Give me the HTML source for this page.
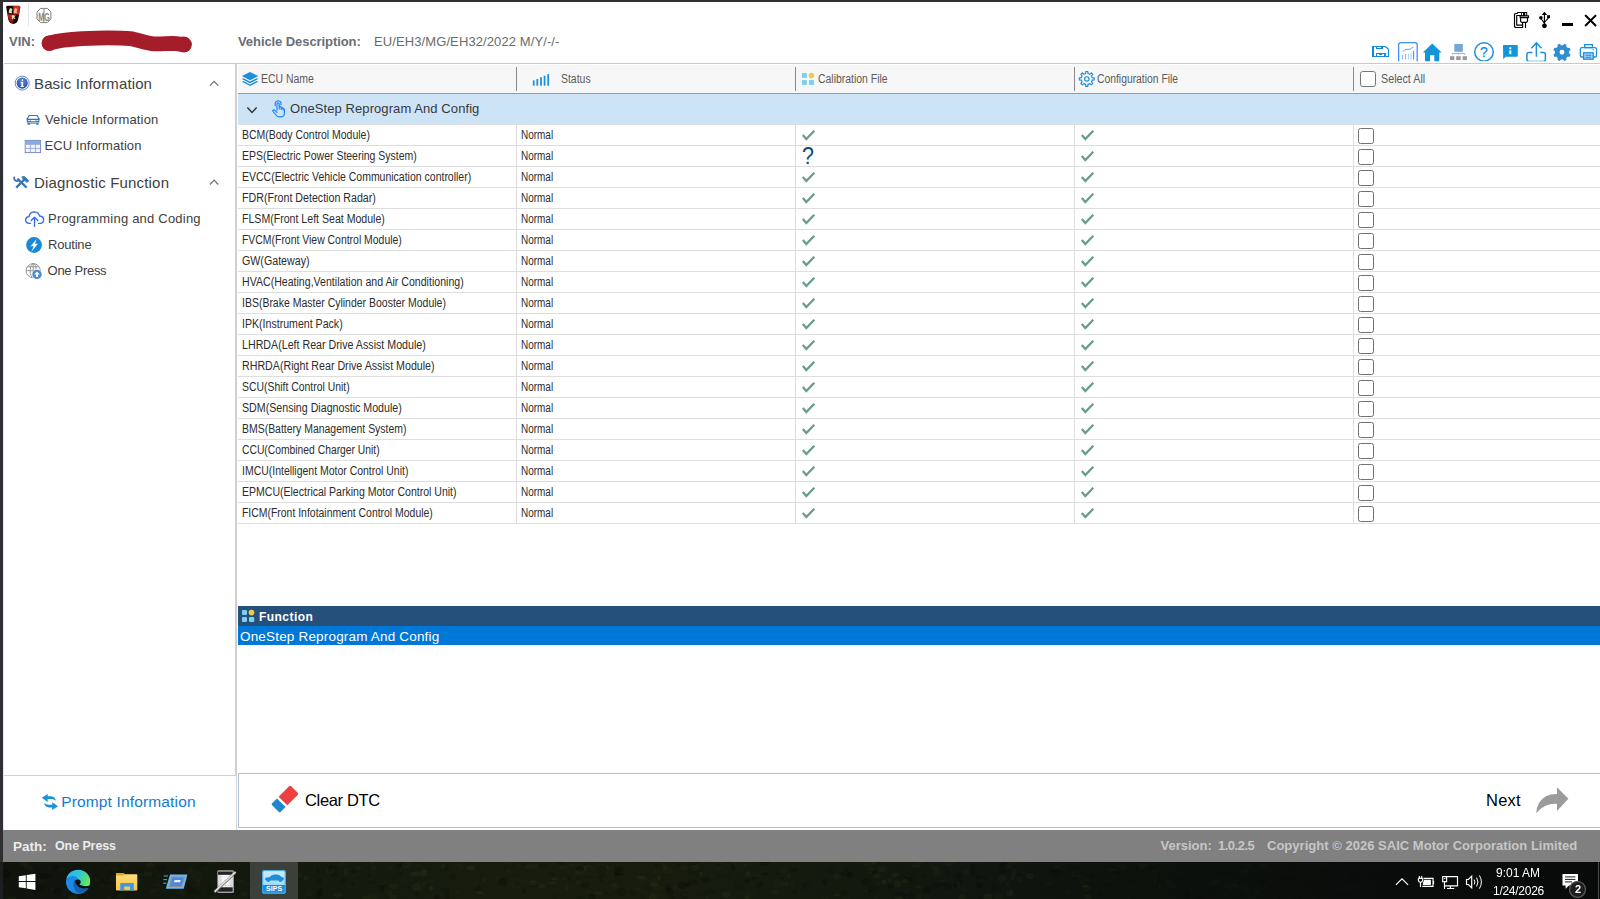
<!DOCTYPE html>
<html lang="en">
<head>
<meta charset="utf-8">
<title>SIPS - One Press</title>
<style>
*{box-sizing:border-box;margin:0;padding:0}
html,body{width:1600px;height:899px;overflow:hidden;background:#fff}
body{position:relative;font-family:"Liberation Sans",sans-serif;color:#333}
.abs{position:absolute}
.t{position:absolute;white-space:pre;line-height:1}
.g{will-change:transform}
svg{position:absolute;overflow:visible}
/* frame */
#btop{left:0;top:0;width:1600px;height:2px;background:#2f2f34}
#bleft{left:0;top:0;width:3px;height:862px;background:#2f2f34}
/* top */
#hline{left:4px;top:63px;width:1596px;height:1px;background:#cacaca}
.lbl{font-weight:700;font-size:13px;color:#696d76}
/* sidebar */
#sideR{left:235px;top:64px;width:2px;height:711px;background:#d0d0d0}
#sideR2{left:236px;top:775px;width:1px;height:55px;background:#d6d6d6}
#sideL{left:3px;top:64px;width:1px;height:766px;background:#e6e6e6}
#sideB{left:4px;top:775px;width:232px;height:1px;background:#d2d2d2}
.h1{font-size:15px;color:#404040;letter-spacing:0.05px}
.h2{font-size:13px;color:#404040;letter-spacing:0.05px}
/* table */
#thead{left:238px;top:65px;width:1362px;height:28px;background:#f7f7f7}
#theadB{left:238px;top:93px;width:1362px;height:1px;background:#9a9a9a}
#grp{left:238px;top:94px;width:1362px;height:31px;background:#cde4f7;border-bottom:1px solid #e0e0e0}
.hsep{position:absolute;top:67px;width:1px;height:24px;background:#8a8a8a}
.vsep{position:absolute;top:124px;width:1px;height:399px;background:#dedede}
.row{position:absolute;left:238px;width:1362px;height:22px;border-bottom:1px solid #dedede}
.cond{font-size:12px;transform:scaleX(0.87);transform-origin:0 0;white-space:pre;line-height:14px}
.row .n{position:absolute;left:3.6px;top:4px;color:#2c2c2c}
.row .s{position:absolute;left:283px;top:4px;color:#2c2c2c;transform:scaleX(0.83)}
.row .cb{position:absolute;left:1120px;top:4px;width:16px;height:16px;border:1px solid #707070;border-radius:2.5px;background:#fff}
.row svg.c1{left:563px;top:5px}
.row svg.c2{left:842px;top:5px}
.q{position:absolute;left:563.8px;top:0.4px;font-size:23.3px;color:#0b4a7c;line-height:22px;transform:scaleX(0.92);transform-origin:0 0}
.th{position:absolute;color:#5a5a5a;top:72px}
/* function */
#fnh{left:238px;top:606px;width:1362px;height:20px;background:#26507c}
#fnr{left:238px;top:626px;width:1362px;height:19px;background:#0078d7}
/* action */
#act{left:238px;top:773px;width:1364px;height:55px;border:1px solid #adc1d8;background:#fff}
/* status */
#status{left:3px;top:830px;width:1597px;height:32px;background:#808080}
/* taskbar */
#task{left:0;top:862px;width:1600px;height:37px;background:linear-gradient(90deg,#0f130c 0%,#14190e 15%,#171c0e 35%,#151a0f 50%,#10150e 62%,#0c100c 75%,#0a0c0b 88%,#090a0a 100%)}
</style>
</head>
<body>
<div class="abs" id="btop"></div>
<div class="abs" id="bleft"></div>
<div class="abs" id="hline"></div>
<div class="abs" id="sideR"></div><div class="abs" id="sideR2"></div><div class="abs" id="sideL"></div>
<div class="abs" id="sideB"></div>
<div class="abs" id="thead"></div>
<div class="abs" id="theadB"></div>
<div class="abs" id="grp"></div>
<div class="abs" id="fnh"></div>
<div class="abs" id="fnr"></div>
<div class="abs" id="act"></div>
<div class="abs" id="status"></div>
<div class="abs" id="task"></div>
<div class="hsep" style="left:516px"></div><div class="hsep" style="left:795px"></div><div class="hsep" style="left:1074px"></div><div class="hsep" style="left:1353px"></div>

<div class="row" style="top:124px"><span class="n cond" style="transform:scaleX(0.8716)">BCM(Body Control Module)</span><span class="s cond">Normal</span><svg class="c1" width="15" height="12" viewBox="0 0 15 12"><path d="M1.8 6.1 L5.3 10 L13.3 1.8" fill="none" stroke="#679d8a" stroke-width="2.3"/></svg><svg class="c2" width="15" height="12" viewBox="0 0 15 12"><path d="M1.8 6.1 L5.3 10 L13.3 1.8" fill="none" stroke="#679d8a" stroke-width="2.3"/></svg><span class="cb"></span></div>
<div class="row" style="top:145px"><span class="n cond" style="transform:scaleX(0.8737)">EPS(Electric Power Steering System)</span><span class="s cond">Normal</span><span class="q">?</span><svg class="c2" width="15" height="12" viewBox="0 0 15 12"><path d="M1.8 6.1 L5.3 10 L13.3 1.8" fill="none" stroke="#679d8a" stroke-width="2.3"/></svg><span class="cb"></span></div>
<div class="row" style="top:166px"><span class="n cond" style="transform:scaleX(0.8745)">EVCC(Electric Vehicle Communication controller)</span><span class="s cond">Normal</span><svg class="c1" width="15" height="12" viewBox="0 0 15 12"><path d="M1.8 6.1 L5.3 10 L13.3 1.8" fill="none" stroke="#679d8a" stroke-width="2.3"/></svg><svg class="c2" width="15" height="12" viewBox="0 0 15 12"><path d="M1.8 6.1 L5.3 10 L13.3 1.8" fill="none" stroke="#679d8a" stroke-width="2.3"/></svg><span class="cb"></span></div>
<div class="row" style="top:187px"><span class="n cond" style="transform:scaleX(0.8884)">FDR(Front Detection Radar)</span><span class="s cond">Normal</span><svg class="c1" width="15" height="12" viewBox="0 0 15 12"><path d="M1.8 6.1 L5.3 10 L13.3 1.8" fill="none" stroke="#679d8a" stroke-width="2.3"/></svg><svg class="c2" width="15" height="12" viewBox="0 0 15 12"><path d="M1.8 6.1 L5.3 10 L13.3 1.8" fill="none" stroke="#679d8a" stroke-width="2.3"/></svg><span class="cb"></span></div>
<div class="row" style="top:208px"><span class="n cond" style="transform:scaleX(0.8816)">FLSM(Front Left Seat Module)</span><span class="s cond">Normal</span><svg class="c1" width="15" height="12" viewBox="0 0 15 12"><path d="M1.8 6.1 L5.3 10 L13.3 1.8" fill="none" stroke="#679d8a" stroke-width="2.3"/></svg><svg class="c2" width="15" height="12" viewBox="0 0 15 12"><path d="M1.8 6.1 L5.3 10 L13.3 1.8" fill="none" stroke="#679d8a" stroke-width="2.3"/></svg><span class="cb"></span></div>
<div class="row" style="top:229px"><span class="n cond" style="transform:scaleX(0.8691)">FVCM(Front View Control Module)</span><span class="s cond">Normal</span><svg class="c1" width="15" height="12" viewBox="0 0 15 12"><path d="M1.8 6.1 L5.3 10 L13.3 1.8" fill="none" stroke="#679d8a" stroke-width="2.3"/></svg><svg class="c2" width="15" height="12" viewBox="0 0 15 12"><path d="M1.8 6.1 L5.3 10 L13.3 1.8" fill="none" stroke="#679d8a" stroke-width="2.3"/></svg><span class="cb"></span></div>
<div class="row" style="top:250px"><span class="n cond" style="transform:scaleX(0.8886)">GW(Gateway)</span><span class="s cond">Normal</span><svg class="c1" width="15" height="12" viewBox="0 0 15 12"><path d="M1.8 6.1 L5.3 10 L13.3 1.8" fill="none" stroke="#679d8a" stroke-width="2.3"/></svg><svg class="c2" width="15" height="12" viewBox="0 0 15 12"><path d="M1.8 6.1 L5.3 10 L13.3 1.8" fill="none" stroke="#679d8a" stroke-width="2.3"/></svg><span class="cb"></span></div>
<div class="row" style="top:271px"><span class="n cond" style="transform:scaleX(0.8823)">HVAC(Heating,Ventilation and Air Conditioning)</span><span class="s cond">Normal</span><svg class="c1" width="15" height="12" viewBox="0 0 15 12"><path d="M1.8 6.1 L5.3 10 L13.3 1.8" fill="none" stroke="#679d8a" stroke-width="2.3"/></svg><svg class="c2" width="15" height="12" viewBox="0 0 15 12"><path d="M1.8 6.1 L5.3 10 L13.3 1.8" fill="none" stroke="#679d8a" stroke-width="2.3"/></svg><span class="cb"></span></div>
<div class="row" style="top:292px"><span class="n cond" style="transform:scaleX(0.8735)">IBS(Brake Master Cylinder Booster Module)</span><span class="s cond">Normal</span><svg class="c1" width="15" height="12" viewBox="0 0 15 12"><path d="M1.8 6.1 L5.3 10 L13.3 1.8" fill="none" stroke="#679d8a" stroke-width="2.3"/></svg><svg class="c2" width="15" height="12" viewBox="0 0 15 12"><path d="M1.8 6.1 L5.3 10 L13.3 1.8" fill="none" stroke="#679d8a" stroke-width="2.3"/></svg><span class="cb"></span></div>
<div class="row" style="top:313px"><span class="n cond" style="transform:scaleX(0.8829)">IPK(Instrument Pack)</span><span class="s cond">Normal</span><svg class="c1" width="15" height="12" viewBox="0 0 15 12"><path d="M1.8 6.1 L5.3 10 L13.3 1.8" fill="none" stroke="#679d8a" stroke-width="2.3"/></svg><svg class="c2" width="15" height="12" viewBox="0 0 15 12"><path d="M1.8 6.1 L5.3 10 L13.3 1.8" fill="none" stroke="#679d8a" stroke-width="2.3"/></svg><span class="cb"></span></div>
<div class="row" style="top:334px"><span class="n cond" style="transform:scaleX(0.8891)">LHRDA(Left Rear Drive Assist Module)</span><span class="s cond">Normal</span><svg class="c1" width="15" height="12" viewBox="0 0 15 12"><path d="M1.8 6.1 L5.3 10 L13.3 1.8" fill="none" stroke="#679d8a" stroke-width="2.3"/></svg><svg class="c2" width="15" height="12" viewBox="0 0 15 12"><path d="M1.8 6.1 L5.3 10 L13.3 1.8" fill="none" stroke="#679d8a" stroke-width="2.3"/></svg><span class="cb"></span></div>
<div class="row" style="top:355px"><span class="n cond" style="transform:scaleX(0.8887)">RHRDA(Right Rear Drive Assist Module)</span><span class="s cond">Normal</span><svg class="c1" width="15" height="12" viewBox="0 0 15 12"><path d="M1.8 6.1 L5.3 10 L13.3 1.8" fill="none" stroke="#679d8a" stroke-width="2.3"/></svg><svg class="c2" width="15" height="12" viewBox="0 0 15 12"><path d="M1.8 6.1 L5.3 10 L13.3 1.8" fill="none" stroke="#679d8a" stroke-width="2.3"/></svg><span class="cb"></span></div>
<div class="row" style="top:376px"><span class="n cond" style="transform:scaleX(0.8682)">SCU(Shift Control Unit)</span><span class="s cond">Normal</span><svg class="c1" width="15" height="12" viewBox="0 0 15 12"><path d="M1.8 6.1 L5.3 10 L13.3 1.8" fill="none" stroke="#679d8a" stroke-width="2.3"/></svg><svg class="c2" width="15" height="12" viewBox="0 0 15 12"><path d="M1.8 6.1 L5.3 10 L13.3 1.8" fill="none" stroke="#679d8a" stroke-width="2.3"/></svg><span class="cb"></span></div>
<div class="row" style="top:397px"><span class="n cond" style="transform:scaleX(0.8874)">SDM(Sensing Diagnostic Module)</span><span class="s cond">Normal</span><svg class="c1" width="15" height="12" viewBox="0 0 15 12"><path d="M1.8 6.1 L5.3 10 L13.3 1.8" fill="none" stroke="#679d8a" stroke-width="2.3"/></svg><svg class="c2" width="15" height="12" viewBox="0 0 15 12"><path d="M1.8 6.1 L5.3 10 L13.3 1.8" fill="none" stroke="#679d8a" stroke-width="2.3"/></svg><span class="cb"></span></div>
<div class="row" style="top:418px"><span class="n cond" style="transform:scaleX(0.8715)">BMS(Battery Management System)</span><span class="s cond">Normal</span><svg class="c1" width="15" height="12" viewBox="0 0 15 12"><path d="M1.8 6.1 L5.3 10 L13.3 1.8" fill="none" stroke="#679d8a" stroke-width="2.3"/></svg><svg class="c2" width="15" height="12" viewBox="0 0 15 12"><path d="M1.8 6.1 L5.3 10 L13.3 1.8" fill="none" stroke="#679d8a" stroke-width="2.3"/></svg><span class="cb"></span></div>
<div class="row" style="top:439px"><span class="n cond" style="transform:scaleX(0.8601)">CCU(Combined Charger Unit)</span><span class="s cond">Normal</span><svg class="c1" width="15" height="12" viewBox="0 0 15 12"><path d="M1.8 6.1 L5.3 10 L13.3 1.8" fill="none" stroke="#679d8a" stroke-width="2.3"/></svg><svg class="c2" width="15" height="12" viewBox="0 0 15 12"><path d="M1.8 6.1 L5.3 10 L13.3 1.8" fill="none" stroke="#679d8a" stroke-width="2.3"/></svg><span class="cb"></span></div>
<div class="row" style="top:460px"><span class="n cond" style="transform:scaleX(0.8724)">IMCU(Intelligent Motor Control Unit)</span><span class="s cond">Normal</span><svg class="c1" width="15" height="12" viewBox="0 0 15 12"><path d="M1.8 6.1 L5.3 10 L13.3 1.8" fill="none" stroke="#679d8a" stroke-width="2.3"/></svg><svg class="c2" width="15" height="12" viewBox="0 0 15 12"><path d="M1.8 6.1 L5.3 10 L13.3 1.8" fill="none" stroke="#679d8a" stroke-width="2.3"/></svg><span class="cb"></span></div>
<div class="row" style="top:481px"><span class="n cond" style="transform:scaleX(0.8766)">EPMCU(Electrical Parking Motor Control Unit)</span><span class="s cond">Normal</span><svg class="c1" width="15" height="12" viewBox="0 0 15 12"><path d="M1.8 6.1 L5.3 10 L13.3 1.8" fill="none" stroke="#679d8a" stroke-width="2.3"/></svg><svg class="c2" width="15" height="12" viewBox="0 0 15 12"><path d="M1.8 6.1 L5.3 10 L13.3 1.8" fill="none" stroke="#679d8a" stroke-width="2.3"/></svg><span class="cb"></span></div>
<div class="row" style="top:502px"><span class="n cond" style="transform:scaleX(0.8695)">FICM(Front Infotainment Control Module)</span><span class="s cond">Normal</span><svg class="c1" width="15" height="12" viewBox="0 0 15 12"><path d="M1.8 6.1 L5.3 10 L13.3 1.8" fill="none" stroke="#679d8a" stroke-width="2.3"/></svg><svg class="c2" width="15" height="12" viewBox="0 0 15 12"><path d="M1.8 6.1 L5.3 10 L13.3 1.8" fill="none" stroke="#679d8a" stroke-width="2.3"/></svg><span class="cb"></span></div>
<div class="vsep" style="left:516px"></div><div class="vsep" style="left:795px"></div><div class="vsep" style="left:1074px"></div><div class="vsep" style="left:1353px"></div>

<svg id="ic" width="1600" height="862" viewBox="0 0 1600 862" style="left:0;top:0;overflow:hidden">
<defs>
<clipPath id="clipTb"><rect x="1360" y="38" width="240" height="23.2"/></clipPath>
<radialGradient id="gInfo" cx="0.5" cy="0.35" r="0.7"><stop offset="0" stop-color="#5f8fe0"/><stop offset="0.6" stop-color="#3b63b8"/><stop offset="1" stop-color="#2a4a98"/></radialGradient>
<linearGradient id="gShield" x1="0" y1="0" x2="0" y2="1"><stop offset="0" stop-color="#d8261c"/><stop offset="1" stop-color="#6a0f14"/></linearGradient>
</defs>

<!-- ===== logos ===== -->
<g id="roewe">
<path d="M6.2 7.2 Q6 5.9 7.4 5.8 H19 Q20.5 5.9 20.3 7.2 L18.2 19.5 Q17.2 23.6 13.3 24 Q9.3 23.6 8.3 19.5Z" fill="#160808"/>
<path d="M13.3 6 H19 Q20.3 6 20.1 7.2 L18.9 14.6 H13.3Z" fill="#d42a1e"/>
<path d="M7.6 14.6 H13.3 V23.6 Q9.6 23.2 8.6 19.6Z" fill="url(#gShield)"/>
<path d="M9.4 9.2 l1 -1.4 l0.9 1.2 l0.6 -1 l0.5 2 l-0.9 1.2 l0.8 1.4 l-1.2 0.8 l-1.4 -0.6 l-0.7 0.9 l-0.3 -1.6z" fill="#e9dcae"/>
<path d="M14.4 9.2 l1 -1.4 l0.9 1.2 l0.6 -1 l0.5 2 l-0.9 1.2 l0.8 1.4 l-1.2 0.8 l-1.4 -0.6 l-0.7 0.9 l-0.3 -1.6z" fill="#f0b49a"/>
<path d="M11.8 15.2 h2.6 l0.8 1 l-0.9 1 l1.2 1.8 h-1.3 l-0.9 -1.4 v1.6 h-1.4z" fill="#e6d9b0"/>
<path d="M14.6 14.8 l1.4 0.2 l-0.4 1.2z" fill="#3e8a3a"/>
</g>
<rect x="28" y="3" width="1" height="23" fill="#e4e4e4"/>
<g id="mg">
<path d="M40.6 8.4 H47.3 L50.9 11.9 V18.9 L47.3 22.6 H40.6 L37 18.9 V11.9Z" fill="#fff" stroke="#7d7d7d" stroke-width="1"/>
<path d="M43.9 8.8 V22.2" stroke="#bdbdbd" stroke-width="2"/>
<text x="38.3" y="20.6" font-family="Liberation Sans,sans-serif" font-weight="700" font-size="11.5" fill="#6f6f6f" opacity="0.85" textLength="11.4" lengthAdjust="spacingAndGlyphs">MG</text>
</g>

<!-- red scribble over VIN -->
<path d="M49.2 43.2 C 57 41, 70 39.3, 82 38.7 C 92 38.2, 100 37.9, 108 37.9 C 117 37.9, 124 37.9, 130 38.6 C 138 39.6, 146 43.4, 154 43.8 C 162 44.1, 170 43.2, 176 43.6 L 184 44.6" fill="none" stroke="#a51c2b" stroke-width="14.8" stroke-linecap="round" stroke-linejoin="round"/>
<circle cx="183.8" cy="44.6" r="8" fill="#a51c2b"/>
<circle cx="49.4" cy="43.3" r="7.8" fill="#a51c2b"/>

<!-- ===== window controls ===== -->
<g transform="translate(1514 12)" stroke="#000" stroke-width="1.15" fill="none" stroke-linejoin="round">
<path d="M8.9 15.5 H1.5 L0.5 14.5 V2.4 L1.4 1.5 H3.1 L3.6 0.5 H7.3"/>
<path d="M7 3.5 H2.7 V13.1 H8.4"/>
<path stroke="none" fill="#000" fill-rule="evenodd" d="M7.1 0 H13.2 V3.9 H7.1Z M8 1 H9 V3.5 H8Z M11.2 1 H12.2 V3.5 H11.2Z"/>
<rect x="6.1" y="3.85" width="8.4" height="1.75"/>
<path d="M6.6 6 V9.3 L7.7 10.4 H12.4 L13.5 9.3 V6"/>
<path d="M8.6 10.5 V15.9 M11.5 10.5 V15.9"/>
</g>
<g id="usb" fill="#000" stroke="none">
<rect x="1543.85" y="13" width="1.2" height="11.5"/>
<path d="M1544.45 11.7 L1547.2 14.9 H1541.7Z"/>
<circle cx="1544.45" cy="25.8" r="2.4"/>
<circle cx="1540.9" cy="17.8" r="1.8"/>
<rect x="1547.1" y="15.2" width="2.9" height="2.9"/>
<path d="M1540.9 18.5 L1544.2 22.8 M1548.5 17.8 L1544.8 22" stroke="#000" stroke-width="1.1" fill="none"/>
</g>
<rect x="1562" y="23" width="11" height="3" fill="#000"/>
<path d="M1585.8 15.8 L1595.3 25.3 M1595.3 15.8 L1585.8 25.3" stroke="#000" stroke-width="2" stroke-linecap="square" fill="none"/>

<!-- ===== toolbar icons ===== -->
<g clip-path="url(#clipTb)">
<!-- save -->
<g fill="#0f8bd8">
<path fill-rule="evenodd" d="M1372 46 H1384.9 L1387.3 47.3 L1389 49 V57 H1372Z M1374 47 H1376 V48.9 H1383 V47 H1384.5 L1386.5 48.2 L1387.9 49.6 V55.9 H1386.1 V53 H1376 V55.9 H1374Z M1377 47.1 H1381 V48 H1377Z M1377 54.1 H1384.1 V55.9 H1377Z"/>
<path d="M1378.8 54.1 H1382.4 L1381.8 54.9 H1379.4Z"/>
</g>
<!-- chart -->
<rect x="1398.6" y="42.6" width="18.6" height="24" rx="2.2" fill="none" stroke="#3d8eff" stroke-width="1.3"/>
<path d="M1403 51.6 Q1404.4 49.4 1406 49.3 H1410 L1413.3 47" fill="none" stroke="#4a96ff" stroke-width="0.9"/>
<path d="M1402.5 55 V59.2 M1405.5 54 V59.4" stroke="#7db2ff" stroke-width="1"/>
<path d="M1408.4 53.5 V59.4 M1411 53 V59.4" stroke="#a9ccff" stroke-width="1"/>
<path d="M1413.6 50.8 V59.5" stroke="#3d8eff" stroke-width="1.1"/>
<!-- home -->
<path d="M1432.25 43.4 L1441.7 52.6 H1439.3 V62 H1434.3 V55.2 H1430 V62 H1425 V52.6 H1422.8Z" fill="#1296db"/>
<!-- network -->
<rect x="1454.3" y="44" width="8.5" height="7.8" fill="#72a7d9"/>
<path d="M1452.4 54.8 V53.5 H1464.7 V54.8 M1458.5 53.5 V54.8" fill="none" stroke="#72a7d9" stroke-width="0.8"/>
<rect x="1450" y="56.2" width="4.3" height="3.9" fill="#9a9a9a"/>
<rect x="1456.2" y="56.2" width="4.5" height="3.9" fill="#9a9a9a"/>
<rect x="1462.6" y="56.2" width="4.3" height="3.9" fill="#9a9a9a"/>
<!-- help -->
<circle cx="1484" cy="52" r="9.25" fill="none" stroke="#1b8fde" stroke-width="1.5"/>
<text x="1480" y="57" font-family="Liberation Sans,sans-serif" font-size="14" fill="#1789da" stroke="#1789da" stroke-width="0.25" opacity="0.99">?</text>
<!-- info bubble -->
<path d="M1503.8 45 H1517 Q1517.8 45 1517.8 45.8 V56 Q1517.8 56.8 1517 56.8 H1505.6 L1503.2 59.2 L1503 45.8 Q1503 45 1503.8 45Z" fill="#1296db"/>
<rect x="1509.3" y="47.3" width="2" height="1.9" fill="#fff"/>
<rect x="1509.3" y="50.4" width="2" height="3.8" fill="#fff"/>
<!-- export -->
<g fill="none" stroke="#1b8fde" stroke-width="1.5">
<path d="M1536.4 43.2 V56.8 M1531.3 48.3 L1536.4 42.9 L1541.5 48.3"/>
<path d="M1532.4 52.4 H1529 Q1526.9 52.4 1526.9 54.5 V59.6 Q1526.9 61.5 1528.8 61.5 H1543.5 Q1545.4 61.5 1545.4 59.6 V54.5 Q1545.4 52.4 1543.3 52.4 H1540.2"/>
</g>
<!-- gear filled -->
<g transform="translate(1562 52.3)">
<path id="gearF" fill="#2f8dd0" fill-rule="evenodd" d="M1.18 -7.10 L2.15 -8.64 L4.59 -7.62 L4.19 -5.86 L5.86 -4.19 L7.62 -4.59 L8.64 -2.15 L7.10 -1.18 L7.10 1.18 L8.64 2.15 L7.62 4.59 L5.86 4.19 L4.19 5.86 L4.59 7.62 L2.15 8.64 L1.18 7.10 L-1.18 7.10 L-2.15 8.64 L-4.59 7.62 L-4.19 5.86 L-5.86 4.19 L-7.62 4.59 L-8.64 2.15 L-7.10 1.18 L-7.10 -1.18 L-8.64 -2.15 L-7.62 -4.59 L-5.86 -4.19 L-4.19 -5.86 L-4.59 -7.62 L-2.15 -8.64 L-1.18 -7.10Z M2.45 0 A2.45 2.45 0 1 0 -2.45 0 A2.45 2.45 0 1 0 2.45 0Z"/>
</g>
<!-- printer -->
<g fill="none" stroke="#1b8fde" stroke-width="1.3">
<rect x="1584.6" y="44.6" width="7.8" height="3"/>
<rect x="1580.3" y="47.6" width="16.2" height="9.4" rx="1.6"/>
<rect x="1583.6" y="52.8" width="9.6" height="6.4" fill="#a5d3f2"/>
<path d="M1585.6 55.3 H1591.2 M1585.6 57.3 H1591.2" stroke-width="1"/>
</g>
<circle cx="1593.3" cy="49.6" r="0.7" fill="#1b8fde"/>
</g>


<!-- ===== sidebar icons ===== -->
<!-- info -->
<circle cx="22.2" cy="83.1" r="7" fill="#fff" stroke="#5577c4" stroke-width="0.9"/>
<circle cx="22.2" cy="83.1" r="5.6" fill="url(#gInfo)"/>
<rect x="21.5" y="79.2" width="1.7" height="1.7" rx="0.8" fill="#fff"/>
<path d="M20.6 82 H23.1 V86.2 H24 V87 H20.4 V86.2 H21.4 V82.8 H20.6Z" fill="#fff"/>
<!-- car -->
<g fill="#3a74b4">
<path fill-rule="evenodd" d="M29.4 115 H36.8 Q37.7 115 38.1 115.9 L39.2 118.6 H40 V119.6 H39.4 V122.6 H26.8 V119.6 H26.2 V118.6 H27 L28.1 115.9 Q28.5 115 29.4 115Z M29.7 116.1 Q29.2 116.1 29 116.6 L28.2 118.8 H38 L37.2 116.6 Q37 116.1 36.5 116.1Z M27.9 119.9 V120.8 L30 121.2 V120.3Z M38.3 119.9 V120.8 L36.2 121.2 V120.3Z M30.6 120 H35.6 V121.3 H30.6Z"/>
<rect x="27.3" y="123.1" width="11.6" height="0.8" opacity="0.75"/>
<rect x="27.5" y="123.2" width="2.5" height="1.5"/>
<rect x="36.2" y="123.2" width="2.5" height="1.5"/>
</g>
<!-- grid -->
<g>
<rect x="25.2" y="140.4" width="15.4" height="12.2" fill="#f2f6fc" stroke="#6f82c4" stroke-width="0.9"/>
<rect x="25.7" y="140.9" width="14.4" height="3.2" fill="#7fb2e2"/>
<path d="M25.5 144.4 H40.3 M25.5 148.4 H40.3 M30.4 140.6 V152.4 M35.4 140.6 V152.4" stroke="#93a6d6" stroke-width="0.9" fill="none"/>
</g>
<!-- tools -->
<g fill="none" stroke="#3a74b4">
<path d="M17.4 178.6 L26.6 187.6" stroke-width="2.2"/>
<path d="M14.6 176.6 A2.9 2.9 0 0 0 18.6 180.6" stroke-width="1.7"/>
<path d="M16.2 187.6 L24.4 179.4" stroke-width="2.2"/>
<path d="M21.8 176.8 L24.4 176.4 L28.8 180.8 L27 182.6 L25.2 180.8 L23.8 180.2Z" fill="#3a74b4" stroke-width="0.8"/>
</g>
<!-- cloud upload -->
<g fill="none" stroke="#3569ef" stroke-width="1.35" stroke-linecap="round" stroke-linejoin="round">
<path d="M30.4 223.4 H29.2 Q25.6 223.2 25.6 219.8 Q25.8 216.8 29 216.6 Q29.8 211.8 34.4 211.8 Q38.6 212 39.6 216 Q43.6 216.4 43.6 219.8 Q43.4 223.2 40.2 223.4 H38.6"/>
<path d="M34.5 226.2 V217.6 M31.2 220.6 L34.5 217.3 L37.8 220.6"/>
</g>
<!-- routine bolt -->
<circle cx="34" cy="245" r="7.9" fill="#1889d6"/>
<path d="M36.9 238.7 L30.6 246.2 H33.8 L31.1 252 L38 243.8 H34.9Z" fill="#fff"/>
<!-- one press globe -->
<g fill="none" stroke="#8c8c8c" stroke-width="0.9">
<circle cx="33.2" cy="270.7" r="7.1"/>
<ellipse cx="33.2" cy="270.7" rx="3" ry="7.1"/>
<path d="M26.2 270.7 H40.2 M27.4 266.8 H39 M33.2 263.6 V277.8"/>
</g>
<circle cx="37" cy="274.4" r="5.3" fill="#fff"/>
<circle cx="37" cy="274.4" r="4.7" fill="#4a8bd2"/>
<path d="M37 271.6 L39.8 274.6 H38 V277 H36 V274.6 H34.2Z" fill="#fff"/>
<!-- chevrons -->
<path d="M210 85.7 L214.1 81.4 L218.2 85.7 M210 184.5 L214.1 180.2 L218.2 184.5" fill="none" stroke="#6e6e6e" stroke-width="1.15"/>

<!-- prompt info icon -->
<g fill="#1893dc">
<path d="M41.8 797.8 L47.7 793.9 V796.3 H51 Q55.4 796.6 55.9 800.8 Q54.6 799 51 799 H47.7 V801.9Z"/>
<path d="M58 806.2 L52.2 802.2 V804.7 H49 Q45.4 804.7 44.2 803 Q44.6 807.2 49 807.4 H52.2 V810.1Z"/>
</g>

<!-- ===== table header icons ===== -->
<!-- layers -->
<g fill="#1b8fde">
<path d="M250 71.9 L258.2 76 L250 80.2 L241.9 76Z"/>
<path d="M243.4 78.2 L250 81.6 L256.7 78.2 L258.2 79 L250 83.2 L241.9 79Z"/>
<path d="M243.4 81 L250 84.4 L256.7 81 L258.2 81.8 L250 86 L241.9 81.8Z"/>
</g>
<!-- signal bars -->
<g fill="#1b8fde">
<rect x="532.8" y="80.4" width="1.8" height="5.3"/>
<rect x="536.4" y="79.1" width="1.8" height="6.6"/>
<rect x="540.1" y="77.2" width="1.8" height="8.5"/>
<rect x="543.7" y="75.8" width="1.8" height="9.9"/>
<rect x="547.3" y="74.1" width="1.8" height="11.6"/>
</g>
<!-- four squares (calibration) -->
<g fill="#7ad2ee">
<rect x="801.9" y="73.1" width="5" height="5" rx="1"/>
<rect x="801.9" y="80" width="5" height="5" rx="1"/>
<rect x="808.9" y="80" width="5.2" height="5" rx="1"/>
<circle cx="811.4" cy="75.6" r="2.8" fill="#f2c94c"/>
</g>
<!-- gear outline -->
<g transform="translate(1086.8 78.9)" fill="none" stroke="#1b8fde" stroke-width="1.15" stroke-linejoin="round">
<path d="M-1.18 -5.47 L-1.00 -7.43 L1.00 -7.43 L1.18 -5.47 L3.04 -4.70 L4.55 -5.96 L5.96 -4.55 L4.70 -3.04 L5.47 -1.18 L7.43 -1.00 L7.43 1.00 L5.47 1.18 L4.70 3.04 L5.96 4.55 L4.55 5.96 L3.04 4.70 L1.18 5.47 L1.00 7.43 L-1.00 7.43 L-1.18 5.47 L-3.04 4.70 L-4.55 5.96 L-5.96 4.55 L-4.70 3.04 L-5.47 1.18 L-7.43 1.00 L-7.43 -1.00 L-5.47 -1.18 L-4.70 -3.04 L-5.96 -4.55 L-4.55 -5.96 L-3.04 -4.70Z"/>
<circle r="2.2"/>
</g>
<!-- header checkbox -->
<rect x="1360.5" y="71.5" width="15" height="15" rx="2.2" fill="#fff" stroke="#767676" stroke-width="1"/>
<!-- group row -->
<path d="M247.4 107.6 L252 112.4 L256.6 107.6" fill="none" stroke="#333" stroke-width="1.5"/>
<g fill="none" stroke="#1a80ff" stroke-width="1.15" stroke-linecap="round" stroke-linejoin="round">
<path d="M277 110.2 V104 Q277 102.8 278.1 102.8 Q279.2 102.8 279.2 104 V109 V107.6 Q279.2 106.6 280.2 106.6 Q281.2 106.6 281.2 107.8 V109.4 V108.4 Q281.2 107.6 282.2 107.6 Q283.1 107.6 283.1 108.6 V110 V109.4 Q283.2 108.6 283.9 108.8 Q284.4 109 284.4 110 V113 Q284.4 116.8 281 116.8 H279.2 Q277.2 116.8 276 115 L273 111.4 Q272.4 110.4 273.2 110 Q274 109.6 274.8 110.4 L277 112.4"/>
<path d="M275.2 105.6 Q274.6 101 278.1 100.8 Q281.6 101 281 105"/>
</g>

<!-- function icon -->
<g fill="#7ad2ee">
<rect x="242" y="610.1" width="5" height="5" rx="1"/>
<rect x="242" y="617.1" width="5" height="5" rx="1"/>
<rect x="249" y="617.1" width="5.2" height="5" rx="1"/>
<circle cx="251.5" cy="612.6" r="2.8" fill="#f2c94c"/>
</g>

<!-- ===== action bar ===== -->
<g transform="translate(285.0 799.0) rotate(-45)">
<path d="M-2.9 -6.1 H11.9 Q13.4 -6.1 13.4 -4.6 V4.6 Q13.4 6.1 11.9 6.1 H-2.9Z" fill="#ee4040"/>
<path d="M-5.3 -6.1 H-12.1 Q-13.6 -6.1 -13.6 -4.6 V4.6 Q-13.6 6.1 -12.1 6.1 H-5.3Z" fill="#1e87d0"/>
</g>
<path d="M1536.2 813.2 Q1537 801 1546 796.2 Q1550.5 794 1557 794.1 V787.3 L1568.4 798.7 L1557 811.1 V803.9 Q1550 803.6 1545 806 Q1540 808.6 1536.2 813.2Z" fill="#9b9b9b"/>
</svg>


<!-- TOP TEXT -->
<div class="t lbl" style="left:9px;top:35px">VIN:</div>
<div class="t lbl" style="left:238px;top:35px;letter-spacing:-0.08px">Vehicle Description:</div>
<div class="t" style="left:374px;top:35px;font-size:13px;color:#6b6b6b;letter-spacing:0.1px">EU/EH3/MG/EH32/2022 M/Y/-/-</div>

<!-- SIDEBAR TEXT -->
<div class="t h1" style="left:34px;top:76px;letter-spacing:0.13px">Basic Information</div>
<div class="t h2" style="left:45px;top:113px;letter-spacing:0.15px">Vehicle Information</div>
<div class="t h2" style="left:44.6px;top:139px">ECU Information</div>
<div class="t h1" style="left:34px;top:175px;letter-spacing:0.18px">Diagnostic Function</div>
<div class="t h2" style="left:48px;top:212px;letter-spacing:0.21px">Programming and Coding</div>
<div class="t h2" style="left:48px;top:238px;letter-spacing:-0.2px">Routine</div>
<div class="t h2" style="left:47.6px;top:264px;letter-spacing:-0.3px">One Press</div>
<div class="t" style="left:61.2px;top:794.3px;font-size:15.5px;color:#0f7bd4;letter-spacing:0.15px">Prompt Information</div>

<!-- TABLE HEADER TEXT -->
<div class="th cond" style="left:261px">ECU Name</div>
<div class="th cond" style="left:561px">Status</div>
<div class="th cond" style="left:818px">Calibration File</div>
<div class="th cond" style="left:1097px;transform:scaleX(0.862)">Configuration File</div>
<div class="th cond" style="left:1381px;transform:scaleX(0.895)">Select All</div>
<div class="t" style="left:290px;top:102px;font-size:13px;color:#383838;letter-spacing:0.08px">OneStep Reprogram And Config</div>

<!-- FUNCTION TEXT -->
<div class="t" style="left:259px;top:610.7px;font-size:12px;font-weight:700;color:#fff;letter-spacing:0.45px">Function</div>
<div class="t" style="left:240px;top:629.7px;font-size:13.5px;color:#fff;letter-spacing:0.18px">OneStep Reprogram And Config</div>

<!-- ACTION TEXT -->
<div class="t" style="left:305px;top:791.7px;font-size:16.5px;color:#000;letter-spacing:-0.35px">Clear DTC</div>
<div class="t" style="left:1486px;top:791.7px;font-size:16.5px;color:#000;letter-spacing:0.25px">Next</div>

<!-- STATUS TEXT -->
<div class="t" style="left:13px;top:840px;font-size:13.5px;font-weight:700;color:#ececec">Path:</div>
<div class="t" style="left:55px;top:839.8px;font-size:12.5px;font-weight:700;color:#ececec;letter-spacing:-0.1px">One Press</div>
<div class="t" style="left:1160.5px;top:838.7px;font-size:13px;font-weight:700;color:#c6c6c6">Version:</div>
<div class="t" style="left:1218px;top:838.7px;font-size:13px;font-weight:700;color:#c6c6c6;letter-spacing:-0.5px">1.0.2.5</div>
<div class="t" style="left:1267px;top:838.7px;font-size:13px;font-weight:700;color:#c6c6c6;letter-spacing:0.02px">Copyright © 2026 SAIC Motor Corporation Limited</div>

<svg id="ict" width="1600" height="37" viewBox="0 862 1600 37" style="left:0;top:862px;overflow:hidden">
<!-- ===== taskbar icons ===== -->
<defs>
<linearGradient id="gEdgeTop" x1="0" y1="0.2" x2="1" y2="0.55"><stop offset="0" stop-color="#33aef2"/><stop offset="0.5" stop-color="#30c4d6"/><stop offset="0.85" stop-color="#55dc78"/><stop offset="1" stop-color="#6fea5c"/></linearGradient>
<linearGradient id="gEdgeBot" x1="0" y1="0" x2="0.5" y2="1"><stop offset="0" stop-color="#1c86e2"/><stop offset="0.7" stop-color="#1a8ce6"/><stop offset="1" stop-color="#1a7fd8"/></linearGradient>
<linearGradient id="gFolder" x1="0" y1="0" x2="0" y2="1"><stop offset="0" stop-color="#ffdd78"/><stop offset="1" stop-color="#f6c74e"/></linearGradient>
<linearGradient id="gSipsTop" x1="0" y1="0" x2="0" y2="1"><stop offset="0" stop-color="#cfeeff"/><stop offset="1" stop-color="#86cff9"/></linearGradient>
<linearGradient id="gSipsBot" x1="0" y1="0" x2="0" y2="1"><stop offset="0" stop-color="#1684d0"/><stop offset="1" stop-color="#2a9ee8"/></linearGradient>
<clipPath id="clipEdge"><circle cx="78.1" cy="881.9" r="12.2"/></clipPath>
</defs>
<g id="tex"><ellipse cx="873" cy="889" rx="4.7" ry="3.8" fill="#040604" opacity="0.13"/><ellipse cx="653" cy="897" rx="4.1" ry="3.7" fill="#36451c" opacity="0.18"/><ellipse cx="535" cy="866" rx="2.5" ry="3.2" fill="#2f3d1a" opacity="0.19"/><ellipse cx="1073" cy="868" rx="4.7" ry="1.6" fill="#050705" opacity="0.09"/><ellipse cx="1361" cy="862" rx="4.6" ry="3.9" fill="#2f3d1a" opacity="0.01"/><ellipse cx="1346" cy="882" rx="4.2" ry="1.8" fill="#040604" opacity="0.02"/><ellipse cx="1351" cy="876" rx="1.6" ry="2.4" fill="#080a06" opacity="0.01"/><ellipse cx="424" cy="884" rx="1.5" ry="3.1" fill="#44521f" opacity="0.12"/><ellipse cx="431" cy="888" rx="2.2" ry="2.5" fill="#44521f" opacity="0.20"/><ellipse cx="35" cy="890" rx="4.9" ry="1.3" fill="#080a06" opacity="0.14"/><ellipse cx="1178" cy="879" rx="4.3" ry="2.9" fill="#050705" opacity="0.11"/><ellipse cx="1302" cy="897" rx="2.9" ry="2.2" fill="#36451c" opacity="0.02"/><ellipse cx="1049" cy="891" rx="4.9" ry="1.3" fill="#050705" opacity="0.11"/><ellipse cx="719" cy="875" rx="2.1" ry="2.0" fill="#050705" opacity="0.18"/><ellipse cx="446" cy="869" rx="1.8" ry="1.6" fill="#080a06" opacity="0.15"/><ellipse cx="71" cy="899" rx="3.6" ry="2.3" fill="#2a3a22" opacity="0.09"/><ellipse cx="353" cy="886" rx="2.1" ry="3.9" fill="#080a06" opacity="0.18"/><ellipse cx="292" cy="898" rx="3.8" ry="1.6" fill="#080a06" opacity="0.10"/><ellipse cx="610" cy="868" rx="4.9" ry="2.0" fill="#2a3a22" opacity="0.18"/><ellipse cx="1366" cy="879" rx="3.5" ry="3.2" fill="#44521f" opacity="0.01"/><ellipse cx="1263" cy="866" rx="4.8" ry="2.7" fill="#36451c" opacity="0.05"/><ellipse cx="255" cy="880" rx="3.6" ry="2.7" fill="#3a4a1e" opacity="0.13"/><ellipse cx="1086" cy="888" rx="4.2" ry="3.3" fill="#44521f" opacity="0.11"/><ellipse cx="373" cy="898" rx="4.4" ry="3.9" fill="#2f3d1a" opacity="0.15"/><ellipse cx="19" cy="882" rx="2.5" ry="3.1" fill="#2a3a22" opacity="0.12"/><ellipse cx="1117" cy="875" rx="4.1" ry="3.3" fill="#080a06" opacity="0.16"/><ellipse cx="244" cy="894" rx="3.3" ry="2.2" fill="#2f3d1a" opacity="0.10"/><ellipse cx="235" cy="893" rx="5.2" ry="2.5" fill="#040604" opacity="0.18"/><ellipse cx="585" cy="885" rx="5.2" ry="2.6" fill="#080a06" opacity="0.23"/><ellipse cx="1085" cy="886" rx="4.4" ry="1.3" fill="#36451c" opacity="0.10"/><ellipse cx="255" cy="890" rx="2.2" ry="3.2" fill="#050705" opacity="0.11"/><ellipse cx="1249" cy="866" rx="5.4" ry="2.6" fill="#36451c" opacity="0.04"/><ellipse cx="534" cy="885" rx="3.9" ry="1.9" fill="#050705" opacity="0.18"/><ellipse cx="1333" cy="894" rx="5.0" ry="3.1" fill="#3a4a1e" opacity="0.02"/><ellipse cx="424" cy="873" rx="3.6" ry="3.9" fill="#44521f" opacity="0.18"/><ellipse cx="588" cy="892" rx="4.1" ry="2.2" fill="#2a3a22" opacity="0.12"/><ellipse cx="669" cy="869" rx="2.0" ry="1.5" fill="#040604" opacity="0.12"/><ellipse cx="154" cy="883" rx="4.0" ry="1.6" fill="#040604" opacity="0.14"/><ellipse cx="606" cy="870" rx="2.7" ry="3.9" fill="#2f3d1a" opacity="0.15"/><ellipse cx="366" cy="898" rx="3.5" ry="2.4" fill="#44521f" opacity="0.13"/><ellipse cx="403" cy="880" rx="2.0" ry="2.9" fill="#44521f" opacity="0.08"/><ellipse cx="194" cy="877" rx="3.4" ry="2.8" fill="#36451c" opacity="0.13"/><ellipse cx="346" cy="872" rx="2.1" ry="4.0" fill="#2a3a22" opacity="0.20"/><ellipse cx="727" cy="894" rx="5.0" ry="3.7" fill="#2f3d1a" opacity="0.11"/><ellipse cx="748" cy="874" rx="2.7" ry="2.7" fill="#44521f" opacity="0.16"/><ellipse cx="1138" cy="867" rx="1.5" ry="2.7" fill="#050705" opacity="0.15"/><ellipse cx="765" cy="863" rx="4.6" ry="2.4" fill="#040604" opacity="0.29"/><ellipse cx="909" cy="894" rx="4.9" ry="2.5" fill="#040604" opacity="0.15"/><ellipse cx="417" cy="893" rx="1.8" ry="3.5" fill="#080a06" opacity="0.22"/><ellipse cx="909" cy="879" rx="2.7" ry="1.7" fill="#080a06" opacity="0.29"/><ellipse cx="755" cy="878" rx="3.7" ry="1.3" fill="#080a06" opacity="0.27"/><ellipse cx="1109" cy="887" rx="1.6" ry="3.2" fill="#080a06" opacity="0.14"/><ellipse cx="71" cy="893" rx="2.4" ry="3.0" fill="#040604" opacity="0.21"/><ellipse cx="615" cy="869" rx="2.2" ry="3.4" fill="#2f3d1a" opacity="0.08"/><ellipse cx="154" cy="876" rx="1.8" ry="1.4" fill="#040604" opacity="0.14"/><ellipse cx="874" cy="862" rx="1.9" ry="3.1" fill="#44521f" opacity="0.19"/><ellipse cx="526" cy="864" rx="4.3" ry="1.6" fill="#040604" opacity="0.17"/><ellipse cx="1319" cy="882" rx="2.4" ry="1.4" fill="#44521f" opacity="0.02"/><ellipse cx="190" cy="871" rx="3.0" ry="3.3" fill="#3a4a1e" opacity="0.12"/><ellipse cx="122" cy="887" rx="1.9" ry="1.5" fill="#050705" opacity="0.14"/><ellipse cx="649" cy="898" rx="1.9" ry="2.7" fill="#36451c" opacity="0.08"/><ellipse cx="214" cy="897" rx="4.2" ry="1.8" fill="#36451c" opacity="0.13"/><ellipse cx="198" cy="885" rx="2.9" ry="1.9" fill="#2a3a22" opacity="0.12"/><ellipse cx="1115" cy="876" rx="4.4" ry="2.2" fill="#36451c" opacity="0.11"/><ellipse cx="509" cy="863" rx="5.5" ry="1.8" fill="#3a4a1e" opacity="0.08"/><ellipse cx="49" cy="869" rx="1.7" ry="3.7" fill="#44521f" opacity="0.05"/><ellipse cx="660" cy="895" rx="4.0" ry="2.4" fill="#3a4a1e" opacity="0.09"/><ellipse cx="916" cy="865" rx="5.0" ry="3.6" fill="#2a3a22" opacity="0.10"/><ellipse cx="391" cy="868" rx="2.6" ry="1.9" fill="#3a4a1e" opacity="0.11"/><ellipse cx="1054" cy="874" rx="1.7" ry="1.3" fill="#2f3d1a" opacity="0.06"/><ellipse cx="937" cy="873" rx="4.2" ry="3.2" fill="#2f3d1a" opacity="0.15"/><ellipse cx="806" cy="886" rx="4.0" ry="3.8" fill="#040604" opacity="0.18"/><ellipse cx="657" cy="872" rx="4.4" ry="3.2" fill="#2f3d1a" opacity="0.09"/><ellipse cx="295" cy="864" rx="3.9" ry="3.2" fill="#36451c" opacity="0.06"/><ellipse cx="1092" cy="877" rx="1.7" ry="2.7" fill="#040604" opacity="0.14"/><ellipse cx="1315" cy="889" rx="2.4" ry="3.4" fill="#36451c" opacity="0.01"/><ellipse cx="343" cy="864" rx="3.1" ry="1.4" fill="#36451c" opacity="0.13"/><ellipse cx="898" cy="894" rx="5.3" ry="1.7" fill="#040604" opacity="0.19"/><ellipse cx="745" cy="865" rx="2.8" ry="1.5" fill="#2f3d1a" opacity="0.15"/><ellipse cx="1200" cy="870" rx="1.6" ry="2.7" fill="#2a3a22" opacity="0.07"/><ellipse cx="733" cy="867" rx="1.5" ry="3.3" fill="#050705" opacity="0.22"/><ellipse cx="197" cy="880" rx="4.6" ry="1.9" fill="#2f3d1a" opacity="0.07"/><ellipse cx="118" cy="871" rx="1.8" ry="2.4" fill="#050705" opacity="0.13"/><ellipse cx="691" cy="871" rx="4.3" ry="3.4" fill="#050705" opacity="0.13"/><ellipse cx="1078" cy="876" rx="4.6" ry="1.2" fill="#2f3d1a" opacity="0.09"/><ellipse cx="621" cy="892" rx="4.1" ry="3.9" fill="#040604" opacity="0.20"/><ellipse cx="152" cy="892" rx="3.7" ry="2.1" fill="#2f3d1a" opacity="0.08"/><ellipse cx="947" cy="873" rx="1.8" ry="3.3" fill="#050705" opacity="0.13"/><ellipse cx="1357" cy="893" rx="3.2" ry="1.9" fill="#050705" opacity="0.01"/><ellipse cx="602" cy="875" rx="2.8" ry="1.2" fill="#050705" opacity="0.25"/><ellipse cx="136" cy="882" rx="2.2" ry="3.2" fill="#36451c" opacity="0.13"/><ellipse cx="168" cy="874" rx="5.2" ry="2.5" fill="#36451c" opacity="0.06"/><ellipse cx="936" cy="868" rx="3.4" ry="2.6" fill="#2f3d1a" opacity="0.16"/><ellipse cx="589" cy="864" rx="5.4" ry="1.3" fill="#080a06" opacity="0.25"/><ellipse cx="498" cy="879" rx="2.3" ry="3.5" fill="#2a3a22" opacity="0.12"/><ellipse cx="1052" cy="871" rx="2.9" ry="1.9" fill="#050705" opacity="0.16"/><ellipse cx="563" cy="867" rx="4.8" ry="2.6" fill="#2f3d1a" opacity="0.12"/><ellipse cx="1056" cy="872" rx="5.2" ry="3.4" fill="#080a06" opacity="0.17"/><ellipse cx="1209" cy="885" rx="4.7" ry="2.3" fill="#2a3a22" opacity="0.06"/><ellipse cx="870" cy="892" rx="1.6" ry="3.1" fill="#040604" opacity="0.19"/><ellipse cx="668" cy="888" rx="3.1" ry="4.0" fill="#040604" opacity="0.22"/><ellipse cx="88" cy="867" rx="3.2" ry="3.9" fill="#2a3a22" opacity="0.07"/><ellipse cx="403" cy="863" rx="4.6" ry="2.9" fill="#040604" opacity="0.19"/><ellipse cx="1356" cy="863" rx="5.2" ry="1.9" fill="#3a4a1e" opacity="0.01"/><ellipse cx="1340" cy="895" rx="4.3" ry="3.5" fill="#040604" opacity="0.03"/><ellipse cx="678" cy="865" rx="2.0" ry="2.2" fill="#080a06" opacity="0.19"/><ellipse cx="7" cy="876" rx="2.2" ry="3.0" fill="#040604" opacity="0.17"/><ellipse cx="543" cy="866" rx="4.3" ry="2.7" fill="#080a06" opacity="0.16"/><ellipse cx="143" cy="873" rx="4.7" ry="3.4" fill="#2f3d1a" opacity="0.06"/><ellipse cx="580" cy="869" rx="4.1" ry="2.8" fill="#040604" opacity="0.28"/><ellipse cx="1020" cy="877" rx="3.2" ry="2.7" fill="#080a06" opacity="0.15"/><ellipse cx="121" cy="895" rx="2.8" ry="2.4" fill="#44521f" opacity="0.11"/><ellipse cx="846" cy="869" rx="2.3" ry="2.9" fill="#040604" opacity="0.18"/><ellipse cx="109" cy="897" rx="2.1" ry="2.7" fill="#2f3d1a" opacity="0.14"/><ellipse cx="904" cy="896" rx="2.4" ry="3.2" fill="#080a06" opacity="0.27"/><ellipse cx="5" cy="887" rx="1.9" ry="2.1" fill="#3a4a1e" opacity="0.11"/><ellipse cx="619" cy="874" rx="4.6" ry="1.7" fill="#040604" opacity="0.29"/><ellipse cx="876" cy="898" rx="1.9" ry="1.5" fill="#2f3d1a" opacity="0.11"/><ellipse cx="245" cy="895" rx="5.5" ry="3.3" fill="#2a3a22" opacity="0.10"/><ellipse cx="11" cy="898" rx="5.3" ry="1.6" fill="#36451c" opacity="0.15"/><ellipse cx="1323" cy="865" rx="4.5" ry="3.2" fill="#3a4a1e" opacity="0.03"/><ellipse cx="276" cy="875" rx="2.1" ry="3.7" fill="#050705" opacity="0.17"/><ellipse cx="416" cy="874" rx="4.9" ry="2.7" fill="#36451c" opacity="0.20"/><ellipse cx="382" cy="889" rx="2.1" ry="3.9" fill="#080a06" opacity="0.30"/><ellipse cx="759" cy="876" rx="5.2" ry="1.5" fill="#3a4a1e" opacity="0.07"/><ellipse cx="1073" cy="875" rx="1.6" ry="1.9" fill="#36451c" opacity="0.12"/><ellipse cx="113" cy="898" rx="2.3" ry="3.4" fill="#2a3a22" opacity="0.06"/><ellipse cx="393" cy="897" rx="4.2" ry="2.6" fill="#36451c" opacity="0.17"/><ellipse cx="702" cy="894" rx="5.3" ry="3.1" fill="#040604" opacity="0.13"/><ellipse cx="36" cy="890" rx="3.2" ry="3.6" fill="#080a06" opacity="0.09"/><ellipse cx="1142" cy="868" rx="2.9" ry="2.0" fill="#3a4a1e" opacity="0.10"/><ellipse cx="306" cy="878" rx="2.6" ry="2.5" fill="#3a4a1e" opacity="0.17"/><ellipse cx="1062" cy="865" rx="4.2" ry="1.3" fill="#2f3d1a" opacity="0.06"/><ellipse cx="29" cy="893" rx="5.3" ry="2.9" fill="#2f3d1a" opacity="0.06"/><ellipse cx="513" cy="885" rx="1.6" ry="3.5" fill="#2f3d1a" opacity="0.17"/><ellipse cx="524" cy="891" rx="2.1" ry="2.7" fill="#040604" opacity="0.22"/><ellipse cx="399" cy="866" rx="3.1" ry="2.1" fill="#040604" opacity="0.22"/><ellipse cx="1352" cy="871" rx="3.8" ry="1.9" fill="#36451c" opacity="0.01"/><ellipse cx="675" cy="888" rx="1.5" ry="3.4" fill="#2a3a22" opacity="0.16"/><ellipse cx="333" cy="873" rx="4.7" ry="1.9" fill="#080a06" opacity="0.26"/><ellipse cx="782" cy="878" rx="1.9" ry="1.5" fill="#040604" opacity="0.22"/><ellipse cx="999" cy="897" rx="5.3" ry="4.0" fill="#2f3d1a" opacity="0.12"/><ellipse cx="956" cy="886" rx="1.7" ry="1.8" fill="#050705" opacity="0.25"/><ellipse cx="421" cy="882" rx="4.8" ry="1.6" fill="#36451c" opacity="0.07"/><ellipse cx="792" cy="883" rx="1.7" ry="3.3" fill="#2f3d1a" opacity="0.12"/><ellipse cx="479" cy="892" rx="3.4" ry="1.6" fill="#44521f" opacity="0.18"/><ellipse cx="877" cy="876" rx="4.0" ry="1.9" fill="#36451c" opacity="0.19"/><ellipse cx="1171" cy="884" rx="3.8" ry="3.7" fill="#3a4a1e" opacity="0.03"/><ellipse cx="63" cy="892" rx="3.5" ry="3.6" fill="#2a3a22" opacity="0.09"/><ellipse cx="579" cy="882" rx="3.3" ry="2.8" fill="#3a4a1e" opacity="0.16"/><ellipse cx="1008" cy="884" rx="1.7" ry="3.2" fill="#2a3a22" opacity="0.15"/><ellipse cx="1010" cy="865" rx="4.1" ry="3.6" fill="#44521f" opacity="0.08"/><ellipse cx="420" cy="862" rx="4.5" ry="2.6" fill="#080a06" opacity="0.19"/><ellipse cx="919" cy="897" rx="2.8" ry="2.9" fill="#2f3d1a" opacity="0.11"/><ellipse cx="114" cy="878" rx="4.0" ry="3.0" fill="#2f3d1a" opacity="0.14"/><ellipse cx="240" cy="881" rx="5.2" ry="2.2" fill="#36451c" opacity="0.08"/><ellipse cx="693" cy="882" rx="5.1" ry="2.8" fill="#080a06" opacity="0.22"/><ellipse cx="354" cy="874" rx="4.0" ry="1.7" fill="#2a3a22" opacity="0.10"/><ellipse cx="882" cy="886" rx="5.3" ry="1.5" fill="#080a06" opacity="0.14"/><ellipse cx="1219" cy="873" rx="4.5" ry="1.7" fill="#040604" opacity="0.07"/><ellipse cx="892" cy="889" rx="2.5" ry="2.3" fill="#3a4a1e" opacity="0.11"/><ellipse cx="412" cy="874" rx="5.5" ry="2.3" fill="#3a4a1e" opacity="0.09"/><ellipse cx="1321" cy="891" rx="5.1" ry="2.6" fill="#36451c" opacity="0.01"/><ellipse cx="592" cy="897" rx="3.7" ry="3.0" fill="#080a06" opacity="0.29"/><ellipse cx="1325" cy="879" rx="1.9" ry="3.4" fill="#2a3a22" opacity="0.01"/><ellipse cx="918" cy="887" rx="3.0" ry="1.5" fill="#36451c" opacity="0.19"/><ellipse cx="601" cy="870" rx="3.6" ry="3.8" fill="#2f3d1a" opacity="0.19"/><ellipse cx="458" cy="892" rx="3.6" ry="1.6" fill="#36451c" opacity="0.11"/><ellipse cx="775" cy="892" rx="4.0" ry="1.9" fill="#44521f" opacity="0.13"/><ellipse cx="567" cy="888" rx="1.9" ry="2.9" fill="#3a4a1e" opacity="0.13"/><ellipse cx="330" cy="871" rx="4.1" ry="3.2" fill="#36451c" opacity="0.18"/><ellipse cx="231" cy="888" rx="1.9" ry="2.8" fill="#44521f" opacity="0.12"/><ellipse cx="761" cy="883" rx="2.3" ry="1.3" fill="#080a06" opacity="0.24"/><ellipse cx="686" cy="894" rx="5.2" ry="2.0" fill="#44521f" opacity="0.09"/><ellipse cx="590" cy="877" rx="5.4" ry="1.6" fill="#040604" opacity="0.13"/><ellipse cx="684" cy="868" rx="5.4" ry="2.4" fill="#2a3a22" opacity="0.16"/><ellipse cx="478" cy="889" rx="3.5" ry="3.2" fill="#050705" opacity="0.15"/><ellipse cx="694" cy="862" rx="4.7" ry="3.4" fill="#050705" opacity="0.16"/><ellipse cx="6" cy="898" rx="4.4" ry="1.7" fill="#2a3a22" opacity="0.08"/><ellipse cx="1161" cy="886" rx="3.0" ry="3.0" fill="#44521f" opacity="0.09"/><ellipse cx="289" cy="871" rx="1.8" ry="3.8" fill="#2a3a22" opacity="0.08"/><ellipse cx="1030" cy="876" rx="3.9" ry="3.3" fill="#3a4a1e" opacity="0.14"/><ellipse cx="744" cy="862" rx="3.2" ry="2.5" fill="#2f3d1a" opacity="0.08"/><ellipse cx="643" cy="878" rx="4.7" ry="2.5" fill="#3a4a1e" opacity="0.17"/><ellipse cx="980" cy="885" rx="3.4" ry="2.9" fill="#040604" opacity="0.13"/><ellipse cx="913" cy="878" rx="3.5" ry="3.9" fill="#050705" opacity="0.13"/><ellipse cx="519" cy="865" rx="2.4" ry="1.2" fill="#44521f" opacity="0.09"/><ellipse cx="1221" cy="876" rx="4.6" ry="1.5" fill="#2f3d1a" opacity="0.04"/><ellipse cx="565" cy="879" rx="3.1" ry="1.3" fill="#2f3d1a" opacity="0.16"/><ellipse cx="1205" cy="887" rx="4.6" ry="3.6" fill="#080a06" opacity="0.10"/><ellipse cx="1260" cy="883" rx="4.8" ry="3.3" fill="#050705" opacity="0.05"/><ellipse cx="353" cy="887" rx="4.6" ry="1.7" fill="#2f3d1a" opacity="0.12"/><ellipse cx="135" cy="884" rx="2.9" ry="1.6" fill="#3a4a1e" opacity="0.11"/><ellipse cx="988" cy="897" rx="4.5" ry="3.2" fill="#44521f" opacity="0.14"/><ellipse cx="1240" cy="880" rx="3.0" ry="4.0" fill="#080a06" opacity="0.08"/><ellipse cx="670" cy="892" rx="3.3" ry="3.8" fill="#040604" opacity="0.19"/><ellipse cx="552" cy="883" rx="5.4" ry="1.2" fill="#3a4a1e" opacity="0.18"/><ellipse cx="102" cy="882" rx="2.4" ry="3.1" fill="#050705" opacity="0.10"/><ellipse cx="457" cy="868" rx="2.9" ry="3.4" fill="#3a4a1e" opacity="0.19"/><ellipse cx="1247" cy="890" rx="5.0" ry="3.1" fill="#36451c" opacity="0.04"/><ellipse cx="659" cy="878" rx="2.1" ry="2.0" fill="#3a4a1e" opacity="0.20"/><ellipse cx="725" cy="895" rx="4.8" ry="2.9" fill="#36451c" opacity="0.11"/><ellipse cx="137" cy="875" rx="5.3" ry="1.4" fill="#2f3d1a" opacity="0.09"/><ellipse cx="148" cy="874" rx="4.8" ry="2.6" fill="#36451c" opacity="0.12"/><ellipse cx="1303" cy="884" rx="5.1" ry="2.1" fill="#2a3a22" opacity="0.03"/><ellipse cx="720" cy="865" rx="3.5" ry="3.7" fill="#2f3d1a" opacity="0.15"/><ellipse cx="569" cy="878" rx="2.0" ry="2.4" fill="#080a06" opacity="0.26"/><ellipse cx="591" cy="897" rx="1.9" ry="1.2" fill="#44521f" opacity="0.08"/><ellipse cx="155" cy="890" rx="5.1" ry="1.4" fill="#44521f" opacity="0.08"/><ellipse cx="920" cy="863" rx="3.3" ry="1.7" fill="#2a3a22" opacity="0.14"/><ellipse cx="555" cy="879" rx="3.4" ry="1.3" fill="#44521f" opacity="0.18"/><ellipse cx="127" cy="878" rx="2.6" ry="3.8" fill="#3a4a1e" opacity="0.09"/><ellipse cx="1200" cy="899" rx="2.0" ry="3.3" fill="#080a06" opacity="0.07"/><ellipse cx="256" cy="898" rx="1.5" ry="3.1" fill="#2f3d1a" opacity="0.11"/><ellipse cx="614" cy="885" rx="3.3" ry="2.0" fill="#2f3d1a" opacity="0.16"/><ellipse cx="343" cy="880" rx="3.8" ry="2.6" fill="#040604" opacity="0.18"/><ellipse cx="476" cy="885" rx="2.1" ry="3.8" fill="#36451c" opacity="0.07"/><ellipse cx="667" cy="870" rx="5.2" ry="4.0" fill="#44521f" opacity="0.10"/><ellipse cx="640" cy="863" rx="2.0" ry="1.7" fill="#080a06" opacity="0.14"/><ellipse cx="1259" cy="885" rx="4.6" ry="3.7" fill="#080a06" opacity="0.07"/><ellipse cx="359" cy="868" rx="2.6" ry="1.4" fill="#36451c" opacity="0.18"/><ellipse cx="1075" cy="879" rx="2.4" ry="1.4" fill="#040604" opacity="0.10"/><ellipse cx="932" cy="866" rx="3.4" ry="3.1" fill="#2f3d1a" opacity="0.08"/><ellipse cx="116" cy="871" rx="3.0" ry="3.9" fill="#3a4a1e" opacity="0.11"/><ellipse cx="453" cy="877" rx="2.8" ry="3.0" fill="#040604" opacity="0.17"/><ellipse cx="212" cy="862" rx="3.8" ry="1.8" fill="#44521f" opacity="0.06"/><ellipse cx="334" cy="876" rx="4.1" ry="1.8" fill="#050705" opacity="0.16"/><ellipse cx="1290" cy="866" rx="3.9" ry="3.2" fill="#080a06" opacity="0.04"/><ellipse cx="617" cy="873" rx="2.5" ry="2.9" fill="#040604" opacity="0.24"/><ellipse cx="948" cy="886" rx="3.8" ry="3.8" fill="#050705" opacity="0.16"/><ellipse cx="785" cy="884" rx="4.1" ry="2.1" fill="#36451c" opacity="0.18"/><ellipse cx="849" cy="874" rx="2.3" ry="2.7" fill="#040604" opacity="0.14"/><ellipse cx="1301" cy="863" rx="3.5" ry="2.0" fill="#44521f" opacity="0.03"/><ellipse cx="390" cy="893" rx="2.6" ry="3.0" fill="#3a4a1e" opacity="0.15"/><ellipse cx="32" cy="870" rx="2.6" ry="3.7" fill="#44521f" opacity="0.06"/><ellipse cx="555" cy="898" rx="3.1" ry="3.7" fill="#040604" opacity="0.13"/><ellipse cx="1384" cy="877" rx="3.9" ry="1.8" fill="#080a06" opacity="0.01"/><ellipse cx="959" cy="876" rx="4.0" ry="2.9" fill="#080a06" opacity="0.22"/><ellipse cx="994" cy="888" rx="2.4" ry="2.9" fill="#050705" opacity="0.14"/><ellipse cx="1373" cy="877" rx="3.4" ry="3.6" fill="#36451c" opacity="0.01"/><ellipse cx="688" cy="885" rx="2.5" ry="1.9" fill="#050705" opacity="0.29"/><ellipse cx="121" cy="891" rx="4.1" ry="2.7" fill="#040604" opacity="0.11"/><ellipse cx="683" cy="885" rx="4.3" ry="3.9" fill="#050705" opacity="0.27"/><ellipse cx="619" cy="869" rx="2.0" ry="1.3" fill="#080a06" opacity="0.22"/><ellipse cx="935" cy="886" rx="5.0" ry="3.2" fill="#080a06" opacity="0.20"/><ellipse cx="1187" cy="895" rx="2.8" ry="3.4" fill="#050705" opacity="0.09"/><ellipse cx="62" cy="869" rx="5.2" ry="2.0" fill="#2f3d1a" opacity="0.10"/><ellipse cx="96" cy="880" rx="5.2" ry="1.9" fill="#2f3d1a" opacity="0.09"/><ellipse cx="3" cy="866" rx="2.1" ry="2.1" fill="#080a06" opacity="0.19"/><ellipse cx="784" cy="871" rx="3.6" ry="3.0" fill="#3a4a1e" opacity="0.08"/><ellipse cx="423" cy="867" rx="5.2" ry="1.8" fill="#2f3d1a" opacity="0.08"/><ellipse cx="1254" cy="878" rx="1.5" ry="1.9" fill="#040604" opacity="0.06"/><ellipse cx="125" cy="866" rx="2.8" ry="2.8" fill="#2f3d1a" opacity="0.09"/><ellipse cx="1349" cy="894" rx="2.6" ry="2.4" fill="#050705" opacity="0.02"/><ellipse cx="437" cy="897" rx="3.4" ry="2.1" fill="#050705" opacity="0.30"/><ellipse cx="156" cy="884" rx="4.1" ry="2.6" fill="#2f3d1a" opacity="0.12"/><ellipse cx="942" cy="881" rx="3.0" ry="1.6" fill="#3a4a1e" opacity="0.14"/><ellipse cx="580" cy="898" rx="3.4" ry="2.8" fill="#080a06" opacity="0.17"/><ellipse cx="320" cy="880" rx="2.5" ry="1.9" fill="#040604" opacity="0.22"/><ellipse cx="1383" cy="878" rx="4.2" ry="2.5" fill="#2f3d1a" opacity="0.00"/><ellipse cx="598" cy="893" rx="3.9" ry="1.8" fill="#3a4a1e" opacity="0.17"/><ellipse cx="602" cy="870" rx="5.3" ry="3.9" fill="#040604" opacity="0.26"/><ellipse cx="190" cy="897" rx="5.0" ry="2.6" fill="#080a06" opacity="0.10"/><ellipse cx="648" cy="887" rx="2.9" ry="2.9" fill="#050705" opacity="0.13"/><ellipse cx="394" cy="886" rx="5.1" ry="3.1" fill="#44521f" opacity="0.12"/><ellipse cx="1100" cy="893" rx="3.0" ry="2.4" fill="#080a06" opacity="0.12"/><ellipse cx="1326" cy="884" rx="4.5" ry="3.8" fill="#3a4a1e" opacity="0.01"/><ellipse cx="277" cy="889" rx="4.5" ry="2.9" fill="#3a4a1e" opacity="0.09"/><ellipse cx="275" cy="870" rx="2.0" ry="1.3" fill="#050705" opacity="0.14"/><ellipse cx="579" cy="872" rx="4.6" ry="2.6" fill="#3a4a1e" opacity="0.17"/><ellipse cx="461" cy="865" rx="3.5" ry="3.9" fill="#2f3d1a" opacity="0.15"/><ellipse cx="706" cy="880" rx="4.2" ry="2.5" fill="#080a06" opacity="0.30"/><ellipse cx="382" cy="886" rx="5.1" ry="1.3" fill="#040604" opacity="0.15"/><ellipse cx="585" cy="868" rx="1.6" ry="3.1" fill="#44521f" opacity="0.17"/><ellipse cx="1187" cy="894" rx="3.7" ry="3.8" fill="#050705" opacity="0.10"/><ellipse cx="309" cy="899" rx="2.2" ry="2.8" fill="#080a06" opacity="0.25"/><ellipse cx="287" cy="877" rx="2.1" ry="2.9" fill="#2a3a22" opacity="0.09"/><ellipse cx="638" cy="889" rx="2.8" ry="1.3" fill="#36451c" opacity="0.13"/><ellipse cx="788" cy="886" rx="2.5" ry="1.4" fill="#2a3a22" opacity="0.08"/><ellipse cx="572" cy="886" rx="1.9" ry="2.2" fill="#36451c" opacity="0.07"/><ellipse cx="843" cy="874" rx="4.1" ry="1.9" fill="#040604" opacity="0.26"/><ellipse cx="882" cy="869" rx="5.3" ry="3.2" fill="#3a4a1e" opacity="0.12"/><ellipse cx="183" cy="892" rx="4.5" ry="3.3" fill="#2f3d1a" opacity="0.10"/><ellipse cx="112" cy="896" rx="3.3" ry="1.4" fill="#050705" opacity="0.17"/><ellipse cx="1107" cy="884" rx="5.4" ry="1.8" fill="#080a06" opacity="0.12"/><ellipse cx="697" cy="866" rx="2.1" ry="2.6" fill="#2a3a22" opacity="0.18"/><ellipse cx="28" cy="867" rx="5.0" ry="3.0" fill="#3a4a1e" opacity="0.09"/><ellipse cx="55" cy="868" rx="2.9" ry="3.1" fill="#080a06" opacity="0.15"/><ellipse cx="320" cy="892" rx="3.4" ry="3.8" fill="#050705" opacity="0.28"/><ellipse cx="40" cy="882" rx="4.9" ry="3.7" fill="#2a3a22" opacity="0.10"/><ellipse cx="197" cy="874" rx="5.1" ry="2.4" fill="#44521f" opacity="0.09"/><ellipse cx="177" cy="887" rx="1.8" ry="3.6" fill="#2f3d1a" opacity="0.14"/><ellipse cx="1289" cy="878" rx="4.8" ry="2.3" fill="#050705" opacity="0.07"/><ellipse cx="271" cy="895" rx="5.0" ry="3.1" fill="#36451c" opacity="0.14"/><ellipse cx="831" cy="870" rx="3.9" ry="3.9" fill="#050705" opacity="0.12"/><ellipse cx="619" cy="869" rx="4.9" ry="3.1" fill="#080a06" opacity="0.21"/><ellipse cx="106" cy="883" rx="4.2" ry="2.1" fill="#040604" opacity="0.10"/><ellipse cx="1239" cy="864" rx="1.6" ry="2.1" fill="#050705" opacity="0.07"/><ellipse cx="1257" cy="893" rx="3.6" ry="1.9" fill="#3a4a1e" opacity="0.05"/><ellipse cx="529" cy="866" rx="4.6" ry="3.2" fill="#44521f" opacity="0.10"/><ellipse cx="1356" cy="883" rx="3.9" ry="1.9" fill="#2f3d1a" opacity="0.02"/><ellipse cx="177" cy="884" rx="4.0" ry="1.2" fill="#040604" opacity="0.15"/><ellipse cx="24" cy="863" rx="4.5" ry="3.8" fill="#36451c" opacity="0.14"/><ellipse cx="369" cy="875" rx="1.9" ry="2.1" fill="#080a06" opacity="0.24"/><ellipse cx="759" cy="886" rx="3.0" ry="3.3" fill="#080a06" opacity="0.16"/><ellipse cx="471" cy="868" rx="4.2" ry="2.7" fill="#44521f" opacity="0.17"/><ellipse cx="1362" cy="896" rx="5.4" ry="1.5" fill="#44521f" opacity="0.01"/><ellipse cx="1199" cy="897" rx="5.2" ry="1.8" fill="#080a06" opacity="0.10"/><ellipse cx="330" cy="869" rx="2.1" ry="3.6" fill="#040604" opacity="0.28"/><ellipse cx="991" cy="878" rx="1.6" ry="2.0" fill="#44521f" opacity="0.07"/><ellipse cx="1241" cy="888" rx="4.4" ry="2.8" fill="#2a3a22" opacity="0.05"/><ellipse cx="845" cy="899" rx="4.7" ry="2.5" fill="#2a3a22" opacity="0.08"/><ellipse cx="1010" cy="893" rx="3.8" ry="3.5" fill="#36451c" opacity="0.16"/><ellipse cx="1331" cy="864" rx="1.8" ry="2.1" fill="#040604" opacity="0.04"/><ellipse cx="277" cy="898" rx="4.6" ry="1.9" fill="#050705" opacity="0.12"/><ellipse cx="236" cy="885" rx="2.0" ry="3.5" fill="#080a06" opacity="0.19"/><ellipse cx="1024" cy="872" rx="3.2" ry="2.3" fill="#36451c" opacity="0.10"/><ellipse cx="1119" cy="885" rx="1.8" ry="1.8" fill="#050705" opacity="0.12"/><ellipse cx="374" cy="868" rx="2.9" ry="3.5" fill="#2f3d1a" opacity="0.11"/><ellipse cx="484" cy="881" rx="2.1" ry="2.3" fill="#2a3a22" opacity="0.19"/><ellipse cx="837" cy="876" rx="3.7" ry="2.8" fill="#2a3a22" opacity="0.15"/><ellipse cx="716" cy="863" rx="3.5" ry="1.4" fill="#2f3d1a" opacity="0.10"/><ellipse cx="884" cy="882" rx="2.7" ry="2.5" fill="#44521f" opacity="0.18"/><ellipse cx="524" cy="882" rx="3.7" ry="3.1" fill="#2f3d1a" opacity="0.09"/><ellipse cx="1271" cy="888" rx="2.2" ry="2.4" fill="#040604" opacity="0.04"/><ellipse cx="249" cy="897" rx="1.7" ry="1.6" fill="#080a06" opacity="0.17"/><ellipse cx="5" cy="873" rx="5.2" ry="3.6" fill="#040604" opacity="0.22"/><ellipse cx="837" cy="895" rx="4.2" ry="1.6" fill="#2f3d1a" opacity="0.19"/><ellipse cx="1005" cy="879" rx="2.8" ry="1.6" fill="#2f3d1a" opacity="0.14"/><ellipse cx="1002" cy="878" rx="4.0" ry="3.8" fill="#3a4a1e" opacity="0.12"/><ellipse cx="1014" cy="872" rx="1.8" ry="3.4" fill="#3a4a1e" opacity="0.12"/><ellipse cx="601" cy="879" rx="2.4" ry="3.3" fill="#040604" opacity="0.21"/><ellipse cx="1143" cy="865" rx="4.9" ry="2.1" fill="#3a4a1e" opacity="0.10"/><ellipse cx="1123" cy="867" rx="4.2" ry="3.5" fill="#2a3a22" opacity="0.11"/><ellipse cx="102" cy="885" rx="3.0" ry="2.5" fill="#2a3a22" opacity="0.11"/><ellipse cx="1244" cy="871" rx="4.7" ry="2.3" fill="#44521f" opacity="0.05"/><ellipse cx="318" cy="895" rx="3.5" ry="3.1" fill="#080a06" opacity="0.24"/><ellipse cx="606" cy="893" rx="2.1" ry="1.9" fill="#080a06" opacity="0.17"/><ellipse cx="958" cy="885" rx="3.0" ry="3.1" fill="#36451c" opacity="0.13"/><ellipse cx="1225" cy="895" rx="1.6" ry="2.1" fill="#44521f" opacity="0.04"/><ellipse cx="338" cy="895" rx="4.9" ry="1.9" fill="#36451c" opacity="0.20"/><ellipse cx="739" cy="886" rx="4.2" ry="3.5" fill="#040604" opacity="0.17"/><ellipse cx="1282" cy="898" rx="4.2" ry="2.0" fill="#080a06" opacity="0.03"/><ellipse cx="1113" cy="870" rx="4.8" ry="1.2" fill="#44521f" opacity="0.10"/><ellipse cx="726" cy="876" rx="5.0" ry="1.7" fill="#080a06" opacity="0.13"/><ellipse cx="37" cy="883" rx="1.8" ry="1.3" fill="#080a06" opacity="0.15"/><ellipse cx="905" cy="881" rx="2.9" ry="2.3" fill="#44521f" opacity="0.16"/><ellipse cx="139" cy="870" rx="4.6" ry="2.6" fill="#050705" opacity="0.11"/><ellipse cx="1152" cy="869" rx="2.1" ry="3.3" fill="#080a06" opacity="0.14"/><ellipse cx="1313" cy="897" rx="1.7" ry="3.6" fill="#44521f" opacity="0.03"/><ellipse cx="1242" cy="899" rx="2.5" ry="1.8" fill="#2f3d1a" opacity="0.03"/><ellipse cx="900" cy="884" rx="3.8" ry="3.4" fill="#2f3d1a" opacity="0.10"/><ellipse cx="1297" cy="897" rx="4.7" ry="1.6" fill="#040604" opacity="0.06"/><ellipse cx="429" cy="881" rx="5.1" ry="2.7" fill="#2f3d1a" opacity="0.07"/><ellipse cx="899" cy="899" rx="4.0" ry="2.6" fill="#44521f" opacity="0.15"/><ellipse cx="685" cy="895" rx="5.0" ry="3.4" fill="#040604" opacity="0.16"/><ellipse cx="267" cy="895" rx="4.9" ry="1.6" fill="#050705" opacity="0.20"/><ellipse cx="1168" cy="877" rx="1.6" ry="1.7" fill="#040604" opacity="0.11"/><ellipse cx="979" cy="877" rx="3.2" ry="1.9" fill="#040604" opacity="0.18"/><ellipse cx="1352" cy="879" rx="2.5" ry="3.2" fill="#050705" opacity="0.03"/><ellipse cx="958" cy="883" rx="4.3" ry="3.6" fill="#080a06" opacity="0.14"/><ellipse cx="610" cy="891" rx="3.4" ry="1.7" fill="#2a3a22" opacity="0.11"/><ellipse cx="973" cy="872" rx="4.5" ry="2.8" fill="#050705" opacity="0.18"/><ellipse cx="1082" cy="882" rx="2.9" ry="2.1" fill="#2f3d1a" opacity="0.09"/><ellipse cx="485" cy="879" rx="2.7" ry="1.4" fill="#2f3d1a" opacity="0.14"/><ellipse cx="1242" cy="890" rx="1.6" ry="1.4" fill="#080a06" opacity="0.09"/><ellipse cx="589" cy="866" rx="3.2" ry="2.6" fill="#2a3a22" opacity="0.15"/><ellipse cx="44" cy="876" rx="4.8" ry="3.2" fill="#080a06" opacity="0.22"/><ellipse cx="443" cy="866" rx="2.5" ry="3.6" fill="#36451c" opacity="0.19"/><ellipse cx="871" cy="869" rx="3.4" ry="2.1" fill="#2a3a22" opacity="0.12"/><ellipse cx="353" cy="872" rx="2.6" ry="2.1" fill="#040604" opacity="0.26"/><ellipse cx="1319" cy="892" rx="2.3" ry="3.0" fill="#2a3a22" opacity="0.02"/><ellipse cx="517" cy="879" rx="4.3" ry="2.6" fill="#2a3a22" opacity="0.16"/><ellipse cx="747" cy="881" rx="3.7" ry="2.0" fill="#050705" opacity="0.25"/><ellipse cx="923" cy="876" rx="1.7" ry="2.0" fill="#080a06" opacity="0.26"/><ellipse cx="1129" cy="898" rx="2.3" ry="1.6" fill="#2f3d1a" opacity="0.06"/><ellipse cx="1020" cy="879" rx="3.1" ry="3.1" fill="#3a4a1e" opacity="0.11"/><ellipse cx="41" cy="887" rx="3.6" ry="3.2" fill="#080a06" opacity="0.21"/><ellipse cx="465" cy="864" rx="3.4" ry="1.3" fill="#080a06" opacity="0.13"/><ellipse cx="891" cy="888" rx="3.0" ry="3.3" fill="#040604" opacity="0.28"/><ellipse cx="139" cy="882" rx="2.2" ry="3.8" fill="#36451c" opacity="0.11"/><ellipse cx="73" cy="897" rx="4.7" ry="3.2" fill="#44521f" opacity="0.13"/><ellipse cx="1289" cy="863" rx="1.6" ry="2.5" fill="#36451c" opacity="0.02"/><ellipse cx="808" cy="887" rx="2.3" ry="1.9" fill="#2f3d1a" opacity="0.12"/><ellipse cx="865" cy="891" rx="3.2" ry="1.7" fill="#2a3a22" opacity="0.10"/><ellipse cx="1326" cy="889" rx="1.8" ry="3.1" fill="#040604" opacity="0.04"/><ellipse cx="1013" cy="877" rx="2.3" ry="3.2" fill="#44521f" opacity="0.11"/><ellipse cx="445" cy="890" rx="4.2" ry="2.8" fill="#050705" opacity="0.14"/><ellipse cx="826" cy="899" rx="2.8" ry="1.6" fill="#3a4a1e" opacity="0.15"/><ellipse cx="118" cy="891" rx="5.1" ry="3.9" fill="#050705" opacity="0.13"/><ellipse cx="372" cy="863" rx="2.5" ry="2.2" fill="#2a3a22" opacity="0.16"/><ellipse cx="672" cy="898" rx="3.7" ry="2.0" fill="#080a06" opacity="0.17"/><ellipse cx="1254" cy="897" rx="3.8" ry="1.5" fill="#44521f" opacity="0.04"/><ellipse cx="395" cy="877" rx="1.7" ry="2.3" fill="#080a06" opacity="0.13"/><ellipse cx="980" cy="898" rx="1.7" ry="3.6" fill="#050705" opacity="0.15"/><ellipse cx="111" cy="886" rx="4.5" ry="1.3" fill="#2a3a22" opacity="0.10"/><ellipse cx="113" cy="869" rx="3.0" ry="1.8" fill="#2a3a22" opacity="0.15"/><ellipse cx="572" cy="865" rx="2.9" ry="2.2" fill="#3a4a1e" opacity="0.08"/><ellipse cx="46" cy="876" rx="5.4" ry="1.6" fill="#040604" opacity="0.13"/><ellipse cx="318" cy="870" rx="1.6" ry="2.5" fill="#050705" opacity="0.25"/><ellipse cx="778" cy="884" rx="3.9" ry="3.9" fill="#2f3d1a" opacity="0.09"/><ellipse cx="1005" cy="865" rx="4.6" ry="2.0" fill="#080a06" opacity="0.22"/><ellipse cx="292" cy="888" rx="2.2" ry="3.9" fill="#2a3a22" opacity="0.09"/><ellipse cx="655" cy="882" rx="4.9" ry="3.2" fill="#3a4a1e" opacity="0.10"/><ellipse cx="1101" cy="869" rx="2.7" ry="1.4" fill="#2a3a22" opacity="0.09"/><ellipse cx="789" cy="876" rx="1.7" ry="1.5" fill="#3a4a1e" opacity="0.19"/><ellipse cx="765" cy="874" rx="3.5" ry="1.4" fill="#040604" opacity="0.27"/><ellipse cx="907" cy="892" rx="2.7" ry="2.8" fill="#2a3a22" opacity="0.16"/><ellipse cx="309" cy="894" rx="2.6" ry="4.0" fill="#2a3a22" opacity="0.12"/><ellipse cx="658" cy="888" rx="5.4" ry="2.7" fill="#2f3d1a" opacity="0.13"/><ellipse cx="283" cy="867" rx="2.1" ry="2.8" fill="#050705" opacity="0.20"/><ellipse cx="795" cy="892" rx="2.8" ry="2.2" fill="#080a06" opacity="0.18"/><ellipse cx="210" cy="890" rx="2.7" ry="3.7" fill="#050705" opacity="0.15"/><ellipse cx="1258" cy="863" rx="5.1" ry="3.1" fill="#080a06" opacity="0.06"/><ellipse cx="199" cy="880" rx="2.1" ry="3.8" fill="#2f3d1a" opacity="0.14"/><ellipse cx="1087" cy="880" rx="4.9" ry="1.3" fill="#36451c" opacity="0.10"/><ellipse cx="26" cy="887" rx="2.4" ry="2.1" fill="#3a4a1e" opacity="0.11"/><ellipse cx="998" cy="873" rx="1.6" ry="1.3" fill="#44521f" opacity="0.06"/><ellipse cx="173" cy="897" rx="3.3" ry="1.9" fill="#44521f" opacity="0.08"/><ellipse cx="255" cy="878" rx="4.3" ry="2.2" fill="#050705" opacity="0.11"/><ellipse cx="962" cy="897" rx="4.1" ry="3.2" fill="#44521f" opacity="0.11"/><ellipse cx="1049" cy="883" rx="4.3" ry="2.4" fill="#2f3d1a" opacity="0.10"/><ellipse cx="324" cy="879" rx="4.6" ry="2.5" fill="#2a3a22" opacity="0.08"/><ellipse cx="1295" cy="879" rx="4.5" ry="1.5" fill="#080a06" opacity="0.06"/><ellipse cx="654" cy="885" rx="4.8" ry="1.4" fill="#44521f" opacity="0.19"/><ellipse cx="406" cy="865" rx="5.0" ry="3.5" fill="#2a3a22" opacity="0.18"/><ellipse cx="267" cy="889" rx="5.2" ry="3.4" fill="#36451c" opacity="0.15"/><ellipse cx="778" cy="874" rx="2.2" ry="1.5" fill="#080a06" opacity="0.21"/><ellipse cx="187" cy="885" rx="2.0" ry="2.1" fill="#040604" opacity="0.19"/><ellipse cx="1088" cy="897" rx="3.8" ry="2.8" fill="#44521f" opacity="0.12"/><ellipse cx="711" cy="891" rx="4.8" ry="2.1" fill="#040604" opacity="0.12"/><ellipse cx="176" cy="894" rx="3.8" ry="2.4" fill="#080a06" opacity="0.09"/><ellipse cx="173" cy="877" rx="5.3" ry="1.7" fill="#040604" opacity="0.22"/><ellipse cx="113" cy="872" rx="4.7" ry="3.8" fill="#080a06" opacity="0.17"/><ellipse cx="1212" cy="893" rx="3.1" ry="1.5" fill="#080a06" opacity="0.09"/><ellipse cx="749" cy="893" rx="5.1" ry="2.5" fill="#2f3d1a" opacity="0.07"/><ellipse cx="249" cy="884" rx="1.9" ry="1.3" fill="#44521f" opacity="0.07"/><ellipse cx="308" cy="869" rx="1.9" ry="1.2" fill="#050705" opacity="0.13"/><ellipse cx="1167" cy="883" rx="2.3" ry="3.7" fill="#36451c" opacity="0.07"/><ellipse cx="334" cy="868" rx="4.0" ry="2.0" fill="#040604" opacity="0.21"/><ellipse cx="639" cy="877" rx="4.9" ry="1.5" fill="#2f3d1a" opacity="0.16"/><ellipse cx="1263" cy="895" rx="2.0" ry="2.2" fill="#2a3a22" opacity="0.04"/><ellipse cx="956" cy="886" rx="2.4" ry="2.2" fill="#050705" opacity="0.18"/><ellipse cx="58" cy="891" rx="5.4" ry="2.9" fill="#080a06" opacity="0.22"/><ellipse cx="1155" cy="878" rx="2.6" ry="3.8" fill="#2a3a22" opacity="0.09"/><ellipse cx="126" cy="884" rx="3.9" ry="1.7" fill="#44521f" opacity="0.12"/><ellipse cx="1264" cy="881" rx="4.6" ry="3.8" fill="#080a06" opacity="0.03"/><ellipse cx="371" cy="882" rx="4.8" ry="1.7" fill="#080a06" opacity="0.18"/><ellipse cx="1282" cy="877" rx="4.3" ry="1.4" fill="#050705" opacity="0.07"/><ellipse cx="480" cy="893" rx="5.4" ry="1.5" fill="#44521f" opacity="0.07"/><ellipse cx="1173" cy="886" rx="3.4" ry="1.6" fill="#36451c" opacity="0.07"/><ellipse cx="1116" cy="874" rx="3.6" ry="3.5" fill="#080a06" opacity="0.16"/><ellipse cx="1374" cy="895" rx="1.7" ry="2.4" fill="#44521f" opacity="0.00"/><ellipse cx="1160" cy="885" rx="4.1" ry="3.8" fill="#040604" opacity="0.14"/><ellipse cx="1224" cy="887" rx="5.3" ry="3.9" fill="#3a4a1e" opacity="0.04"/><ellipse cx="633" cy="893" rx="3.0" ry="3.2" fill="#040604" opacity="0.16"/><ellipse cx="852" cy="879" rx="3.8" ry="1.4" fill="#2f3d1a" opacity="0.08"/><ellipse cx="1336" cy="865" rx="3.9" ry="1.9" fill="#44521f" opacity="0.02"/><ellipse cx="942" cy="884" rx="4.5" ry="1.9" fill="#040604" opacity="0.18"/><ellipse cx="897" cy="884" rx="3.9" ry="3.7" fill="#44521f" opacity="0.11"/><ellipse cx="1003" cy="866" rx="3.7" ry="3.3" fill="#040604" opacity="0.12"/><ellipse cx="533" cy="883" rx="3.9" ry="3.1" fill="#3a4a1e" opacity="0.18"/><ellipse cx="1003" cy="872" rx="4.6" ry="2.8" fill="#050705" opacity="0.18"/><ellipse cx="418" cy="865" rx="2.5" ry="3.0" fill="#36451c" opacity="0.09"/><ellipse cx="870" cy="873" rx="1.7" ry="1.7" fill="#2f3d1a" opacity="0.13"/><ellipse cx="927" cy="898" rx="4.5" ry="2.9" fill="#2f3d1a" opacity="0.10"/><ellipse cx="1323" cy="870" rx="5.3" ry="3.4" fill="#050705" opacity="0.04"/><ellipse cx="1224" cy="889" rx="3.8" ry="3.0" fill="#040604" opacity="0.10"/><ellipse cx="1333" cy="867" rx="3.6" ry="3.2" fill="#3a4a1e" opacity="0.01"/><ellipse cx="417" cy="887" rx="5.0" ry="4.0" fill="#44521f" opacity="0.15"/><ellipse cx="509" cy="871" rx="1.9" ry="1.3" fill="#3a4a1e" opacity="0.18"/><ellipse cx="400" cy="874" rx="3.3" ry="1.8" fill="#080a06" opacity="0.20"/><ellipse cx="866" cy="882" rx="5.3" ry="3.5" fill="#040604" opacity="0.25"/><ellipse cx="1227" cy="874" rx="3.9" ry="2.1" fill="#080a06" opacity="0.10"/><ellipse cx="170" cy="885" rx="4.8" ry="3.0" fill="#2f3d1a" opacity="0.09"/><ellipse cx="897" cy="876" rx="5.1" ry="3.2" fill="#36451c" opacity="0.09"/><ellipse cx="1311" cy="884" rx="4.2" ry="2.3" fill="#080a06" opacity="0.04"/><ellipse cx="825" cy="882" rx="2.4" ry="2.9" fill="#040604" opacity="0.29"/><ellipse cx="911" cy="898" rx="2.5" ry="3.6" fill="#040604" opacity="0.12"/><ellipse cx="1291" cy="875" rx="2.0" ry="2.7" fill="#2a3a22" opacity="0.04"/><ellipse cx="878" cy="884" rx="1.8" ry="2.7" fill="#2f3d1a" opacity="0.10"/><ellipse cx="561" cy="863" rx="4.5" ry="2.2" fill="#050705" opacity="0.17"/><ellipse cx="190" cy="891" rx="5.1" ry="3.7" fill="#040604" opacity="0.17"/><ellipse cx="503" cy="882" rx="4.5" ry="3.7" fill="#040604" opacity="0.29"/><ellipse cx="39" cy="888" rx="1.5" ry="3.7" fill="#36451c" opacity="0.06"/><ellipse cx="518" cy="887" rx="4.5" ry="2.4" fill="#2a3a22" opacity="0.10"/><ellipse cx="1230" cy="886" rx="4.2" ry="3.3" fill="#44521f" opacity="0.03"/><ellipse cx="264" cy="868" rx="1.9" ry="3.8" fill="#080a06" opacity="0.10"/><ellipse cx="230" cy="862" rx="1.7" ry="3.0" fill="#3a4a1e" opacity="0.05"/><ellipse cx="52" cy="889" rx="1.6" ry="2.5" fill="#44521f" opacity="0.10"/><ellipse cx="1045" cy="877" rx="2.5" ry="3.3" fill="#2f3d1a" opacity="0.07"/><ellipse cx="199" cy="867" rx="1.9" ry="2.3" fill="#050705" opacity="0.16"/><ellipse cx="1007" cy="866" rx="2.9" ry="2.6" fill="#3a4a1e" opacity="0.08"/><ellipse cx="1153" cy="872" rx="3.8" ry="2.7" fill="#2a3a22" opacity="0.10"/><ellipse cx="895" cy="875" rx="3.4" ry="1.9" fill="#3a4a1e" opacity="0.13"/><ellipse cx="1235" cy="885" rx="2.5" ry="2.6" fill="#44521f" opacity="0.06"/><ellipse cx="844" cy="893" rx="4.2" ry="2.7" fill="#040604" opacity="0.22"/><ellipse cx="695" cy="868" rx="4.8" ry="3.2" fill="#2f3d1a" opacity="0.14"/><ellipse cx="457" cy="868" rx="2.3" ry="2.8" fill="#050705" opacity="0.28"/><ellipse cx="664" cy="866" rx="2.2" ry="3.2" fill="#2a3a22" opacity="0.17"/><ellipse cx="794" cy="870" rx="4.6" ry="2.0" fill="#040604" opacity="0.19"/><ellipse cx="20" cy="882" rx="2.3" ry="2.0" fill="#080a06" opacity="0.19"/><ellipse cx="736" cy="862" rx="5.4" ry="3.6" fill="#2f3d1a" opacity="0.10"/><ellipse cx="901" cy="877" rx="5.1" ry="2.7" fill="#080a06" opacity="0.20"/><ellipse cx="618" cy="879" rx="3.6" ry="1.5" fill="#040604" opacity="0.13"/><ellipse cx="150" cy="865" rx="4.5" ry="2.4" fill="#44521f" opacity="0.12"/><ellipse cx="643" cy="897" rx="5.3" ry="1.4" fill="#050705" opacity="0.12"/><ellipse cx="1358" cy="878" rx="2.2" ry="3.7" fill="#040604" opacity="0.01"/><ellipse cx="162" cy="868" rx="4.8" ry="2.7" fill="#080a06" opacity="0.15"/><ellipse cx="250" cy="895" rx="2.0" ry="2.6" fill="#050705" opacity="0.18"/><ellipse cx="1069" cy="892" rx="2.6" ry="1.7" fill="#2f3d1a" opacity="0.11"/><ellipse cx="198" cy="893" rx="3.7" ry="2.3" fill="#080a06" opacity="0.20"/><ellipse cx="104" cy="864" rx="3.5" ry="1.7" fill="#050705" opacity="0.15"/><ellipse cx="979" cy="886" rx="2.9" ry="1.8" fill="#050705" opacity="0.20"/><ellipse cx="273" cy="890" rx="2.4" ry="3.0" fill="#2a3a22" opacity="0.11"/><ellipse cx="1379" cy="888" rx="3.2" ry="3.9" fill="#3a4a1e" opacity="0.01"/><ellipse cx="551" cy="874" rx="3.8" ry="2.2" fill="#080a06" opacity="0.14"/><ellipse cx="850" cy="876" rx="3.5" ry="3.7" fill="#080a06" opacity="0.24"/><ellipse cx="276" cy="876" rx="3.6" ry="2.0" fill="#44521f" opacity="0.08"/><ellipse cx="973" cy="867" rx="2.4" ry="2.4" fill="#040604" opacity="0.18"/><ellipse cx="867" cy="863" rx="4.4" ry="3.5" fill="#2a3a22" opacity="0.13"/><ellipse cx="1287" cy="884" rx="4.7" ry="3.5" fill="#080a06" opacity="0.07"/><ellipse cx="579" cy="881" rx="2.6" ry="3.2" fill="#080a06" opacity="0.12"/><ellipse cx="707" cy="898" rx="1.6" ry="3.0" fill="#3a4a1e" opacity="0.10"/><ellipse cx="1011" cy="892" rx="1.8" ry="3.1" fill="#3a4a1e" opacity="0.07"/><ellipse cx="412" cy="880" rx="3.2" ry="1.8" fill="#2f3d1a" opacity="0.10"/><ellipse cx="1293" cy="870" rx="5.5" ry="2.7" fill="#040604" opacity="0.05"/><ellipse cx="615" cy="886" rx="3.1" ry="3.6" fill="#3a4a1e" opacity="0.09"/><ellipse cx="1203" cy="890" rx="2.3" ry="1.9" fill="#44521f" opacity="0.03"/><ellipse cx="1172" cy="891" rx="5.4" ry="1.5" fill="#050705" opacity="0.10"/><ellipse cx="890" cy="880" rx="2.6" ry="2.4" fill="#36451c" opacity="0.13"/><ellipse cx="949" cy="863" rx="5.0" ry="3.7" fill="#2f3d1a" opacity="0.17"/><ellipse cx="1057" cy="867" rx="4.3" ry="2.0" fill="#2f3d1a" opacity="0.12"/><ellipse cx="1038" cy="875" rx="1.9" ry="3.4" fill="#2f3d1a" opacity="0.07"/><ellipse cx="1085" cy="889" rx="2.0" ry="1.2" fill="#050705" opacity="0.17"/><ellipse cx="719" cy="865" rx="3.4" ry="1.5" fill="#050705" opacity="0.27"/><ellipse cx="874" cy="872" rx="2.3" ry="1.4" fill="#080a06" opacity="0.29"/><ellipse cx="179" cy="892" rx="5.0" ry="2.1" fill="#2a3a22" opacity="0.11"/><ellipse cx="1216" cy="882" rx="5.2" ry="2.6" fill="#36451c" opacity="0.06"/><ellipse cx="542" cy="886" rx="3.9" ry="2.2" fill="#44521f" opacity="0.13"/><ellipse cx="1372" cy="862" rx="4.3" ry="2.2" fill="#44521f" opacity="0.01"/><ellipse cx="747" cy="898" rx="2.5" ry="2.9" fill="#44521f" opacity="0.16"/><ellipse cx="927" cy="890" rx="4.1" ry="3.1" fill="#080a06" opacity="0.24"/><ellipse cx="1317" cy="862" rx="2.7" ry="2.4" fill="#44521f" opacity="0.03"/><ellipse cx="299" cy="875" rx="3.9" ry="2.6" fill="#44521f" opacity="0.11"/><ellipse cx="916" cy="866" rx="4.6" ry="1.4" fill="#2f3d1a" opacity="0.12"/><ellipse cx="656" cy="865" rx="2.1" ry="2.6" fill="#080a06" opacity="0.19"/><ellipse cx="718" cy="870" rx="4.8" ry="1.6" fill="#2f3d1a" opacity="0.09"/><ellipse cx="1129" cy="880" rx="3.4" ry="2.8" fill="#050705" opacity="0.14"/><ellipse cx="447" cy="896" rx="2.5" ry="3.6" fill="#080a06" opacity="0.22"/><ellipse cx="963" cy="890" rx="4.2" ry="3.0" fill="#36451c" opacity="0.07"/><ellipse cx="966" cy="872" rx="3.8" ry="3.2" fill="#44521f" opacity="0.10"/><ellipse cx="203" cy="864" rx="3.6" ry="1.7" fill="#080a06" opacity="0.21"/><ellipse cx="701" cy="874" rx="2.1" ry="2.4" fill="#3a4a1e" opacity="0.18"/><ellipse cx="4" cy="865" rx="2.1" ry="3.9" fill="#2f3d1a" opacity="0.08"/></g>
<rect x="0" y="862" width="3" height="37" fill="#26262a" opacity="0.6"/>
<!-- windows -->
<g fill="#fff">
<path d="M18.8 876.3 L25.8 875.2 V880.9 H18.8Z"/>
<path d="M26.7 875 L35.4 873.8 V880.9 H26.7Z"/>
<path d="M18.8 882 H25.8 V888.2 L18.8 887.2Z"/>
<path d="M26.7 882 H35.4 V890 L26.7 888.5Z"/>
</g>
<!-- edge -->
<g clip-path="url(#clipEdge)">
<circle cx="78.1" cy="881.9" r="12.3" fill="url(#gEdgeBot)"/>
<path d="M74.2 880.2 C 72.4 885, 74 890.4, 78.4 892.8 C 83.4 893.4, 87.2 890.6, 88.6 887.6 C 84 888.2, 80 887.8, 78 886 C 76 884.2, 75 882.5, 75.3 880.6Z" fill="#145fb2"/>
<path d="M65.6 878.4 C 66.8 872.6, 72 869.4, 78.1 869.5 C 85.6 869.6, 91 875, 90.4 881.2 C 90.2 883.6, 89.4 885.2, 88 886.3 C 85 886.7, 82 886.2, 79.1 884.5 C 80 884.2, 81 883, 80.5 880.9 C 80 879.8, 79.2 879.4, 78 879.5 C 77.6 878, 77 877.2, 76.2 876.7 C 75 876.1, 73.8 876, 72.7 876.1 C 71 876.3, 69.6 876.8, 68.4 877.4 C 67 878, 66.2 878.3, 65.6 878.4Z" fill="url(#gEdgeTop)"/>
<path d="M75.3 880.6 C 76.5 879.3, 79.5 879, 80.5 880.9 C 81 883, 80 884.2, 79.1 884.5 C 82 886, 85 886.4, 87.8 886.1 L 91.5 885.2 L 91.5 890.4 L 88.3 888 C 84 888.9, 80 888.3, 78 886.3 C 76 884.4, 75 882.5, 75.3 880.6Z" fill="#0d110b"/>
</g>
<!-- folder -->
<path d="M116 873.6 Q116 872.9 116.7 872.9 H123.4 L124.8 874.3 H136.6 Q137.3 874.3 137.3 875 V889.8 Q137.3 890.4 136.6 890.4 H116.7 Q116 890.4 116 889.8Z" fill="url(#gFolder)"/>
<path d="M116 873.6 Q116 872.9 116.7 872.9 H123.4 L124.6 874.2 L123.4 875.4 H116Z" fill="#e7a416"/>
<path d="M120.3 883 H133.8 V890.6 H130 V886.5 H124.2 V890.6 H120.3Z" fill="#3b99e6"/>
<!-- run -->
<path d="M169 874.9 M163.8 876 H168 M163.4 879.6 H167 M163.2 883.2 H166.4" stroke="#5aa8e6" stroke-width="1" fill="none"/>
<path d="M170 874.6 H187.4 L183.7 888.8 H165.8Z" fill="#6bb8ef"/>
<path d="M171.6 876.6 H184.9 L182.2 886.9 H168.7Z" fill="#8c8f96"/>
<path d="M172.7 877.8 H183.4 L181.2 885.8 H170.4Z" fill="#4a86e2"/>
<path d="M174.6 880 H180.6 L180 882.3 H174Z" fill="#eef2ff"/>
<!-- tablet pen -->
<rect x="217.3" y="870.3" width="16.6" height="22.7" rx="1.2" fill="#a2a2a2"/>
<rect x="218.4" y="875" width="14.2" height="12.2" fill="#f4f4f4"/>
<rect x="218.4" y="875" width="3" height="12.2" fill="#dcdcdc"/>
<rect x="229.6" y="875" width="3" height="12.2" fill="#dedede"/>
<rect x="218.1" y="871.7" width="14.5" height="3" fill="#242126"/>
<rect x="218.1" y="887.4" width="14.5" height="4.2" fill="#242126"/>
<path d="M225.2 885.4 H226.2" stroke="#e05050" stroke-width="0.7"/>
<path d="M228 885.4 H229 M230.5 885.4 H231.5" stroke="#6cc070" stroke-width="0.7"/>
<path d="M235.2 872.6 L214.4 892.2" stroke="#6a6a6a" stroke-width="2.6"/>
<path d="M235.6 871.9 L214.6 891.6" stroke="#dedede" stroke-width="1.6"/>
<!-- sips -->
<rect x="250" y="862" width="48" height="37" fill="#3b4039"/>
<rect x="262.2" y="870.1" width="23.5" height="23.7" rx="2.6" fill="url(#gSipsTop)"/>
<path d="M262.2 885 H285.7 V891.2 Q285.7 893.8 283.1 893.8 H264.8 Q262.2 893.8 262.2 891.2Z" fill="url(#gSipsBot)"/>
<rect x="262.7" y="870.6" width="22.5" height="22.7" rx="2.3" fill="none" stroke="#3aa3ea" stroke-width="1"/>
<path d="M265 879.4 Q265 877.8 266.8 877.6 L269.4 877.2 Q271.6 874.4 274.6 874.4 H277 Q279.4 874.4 280.8 876.6 L283 877.4 Q283.8 877.8 283.8 879 Q283.8 880.4 282.6 880.4 H266.4 Q265 880.4 265 879.4Z" fill="#1c8dd6"/>
<circle cx="268.4" cy="880.3" r="1.75" fill="#1c8dd6"/>
<circle cx="280.4" cy="880.3" r="1.75" fill="#1c8dd6"/>
<!-- tray -->
<g fill="none" stroke="#fff" stroke-width="1.15">
<path d="M1395.9 884.8 L1402 878.8 L1408.1 884.8"/>
<!-- battery plug -->
<path d="M1419.4 876 V878.2 M1421.7 876 V878.2 M1418.2 878.4 H1422.9 M1418.4 878.4 V880.4 Q1418.6 882.3 1420.5 882.3 Q1422.5 882.3 1422.7 880.4 V878.4 M1420.5 882.3 V887"/>
<path d="M1423.6 878.4 H1433 V886.4 H1422.3"/>
<path d="M1433.6 880.8 V884" stroke-width="1"/>
<path d="M1424.2 879.7 H1430.9 V884.9 H1422.9 V883Z" fill="#fff" stroke="none"/>
<!-- network -->
<path d="M1446.7 876.6 H1457.5 V885.9 H1445.1"/>
<path d="M1442.7 876.6 H1446.6 V881.6 H1442.7Z M1444.5 881.6 V888.9 M1450.3 886 V888.4 M1447 888.5 H1454.2"/>
<path d="M1443.9 878.6 H1445.4" stroke-width="0.9"/>
<!-- volume -->
<path d="M1466.5 879.5 H1468.4 L1471.7 876.2 V887.8 L1468.4 884.5 H1466.5Z"/>
<path d="M1474.2 879.6 Q1475.6 882 1474.2 884.4" stroke-width="1"/>
<path d="M1476.6 877.6 Q1479.4 882 1476.6 886.4" stroke-width="1"/>
<path d="M1479.4 875.4 Q1483.4 882 1479.4 888.6" stroke-width="1"/>
</g>
<!-- notification -->
<path d="M1562.5 873.9 H1578 V885.4 H1569 L1565.6 888.8 V885.4 H1562.5Z" fill="#fff"/>
<path d="M1565 876.9 H1575.4 M1565 879.4 H1575.4 M1565 881.9 H1572" stroke="#1a1a1a" stroke-width="1"/>
<circle cx="1577.5" cy="889.3" r="8" fill="#1d1d1d" stroke="#5c5c5c" stroke-width="1.2"/>
<rect x="1598" y="862" width="1" height="37" fill="#4a4a4a"/>
</svg>

<!-- TASKBAR TEXT -->
<div class="t" style="left:265.8px;top:885.7px;font-size:6.8px;font-weight:700;color:#fff;letter-spacing:0.1px;transform:scaleX(1.02);transform-origin:0 0">SIPS</div>
<div class="t g" style="left:1496px;top:867px;font-size:12px;color:#fff">9:01 AM</div>
<div class="t g" style="left:1493px;top:885px;font-size:12px;color:#fff;letter-spacing:-0.27px">1/24/2026</div>
<div class="t g" style="left:1574.5px;top:884px;font-size:11px;font-weight:700;color:#fff">2</div>
</body>
</html>
